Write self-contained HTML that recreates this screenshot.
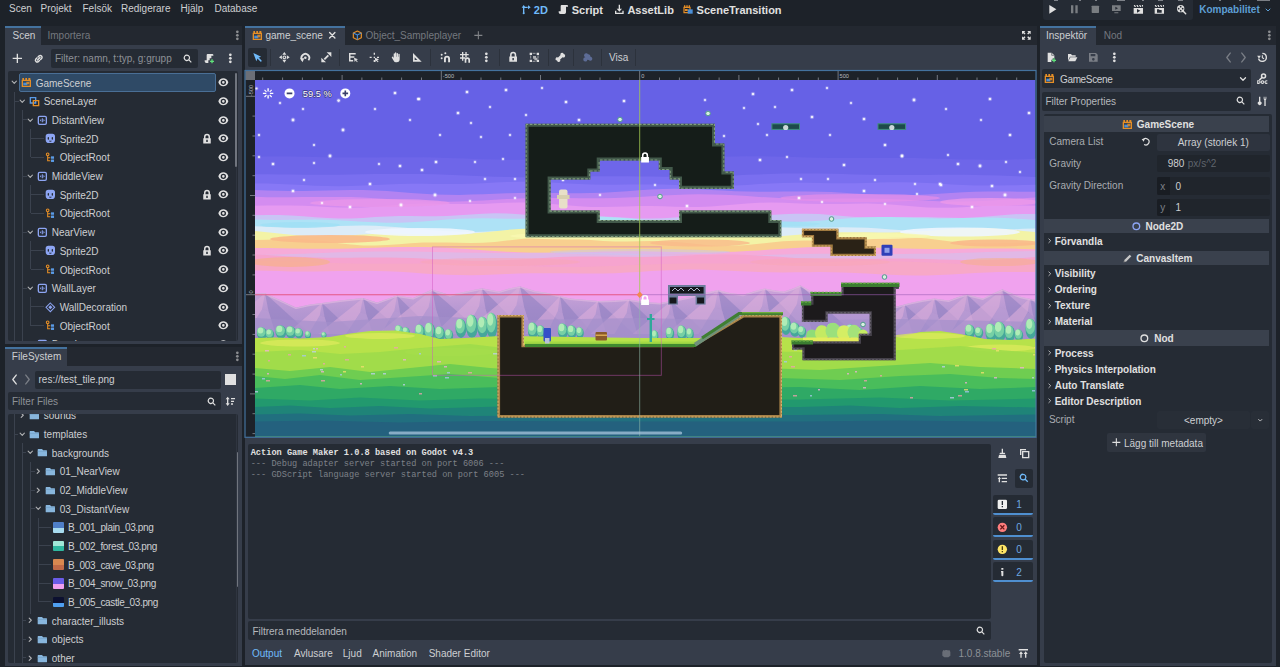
<!DOCTYPE html>
<html lang="sv"><head><meta charset="utf-8"><title>Action Game Maker</title>
<style>
html,body{margin:0;padding:0}
body{width:1280px;height:667px;background:#1d2229;position:relative;overflow:hidden;font-family:"Liberation Sans",sans-serif;font-size:10px;color:#cdcfd2}
.a{position:absolute;box-sizing:border-box}
.t{white-space:pre}
.ic{position:absolute;overflow:visible}
.mono{font-family:"Liberation Mono",monospace}
</style></head>
<body>
<div class="a t" style="left:9px;top:1.1px;height:16px;line-height:16px;font-size:10px;color:#cdcfd2;">Scen</div>
<div class="a t" style="left:40.5px;top:1.1px;height:16px;line-height:16px;font-size:10px;color:#cdcfd2;">Projekt</div>
<div class="a t" style="left:82.5px;top:1.1px;height:16px;line-height:16px;font-size:10px;color:#cdcfd2;">Felsök</div>
<div class="a t" style="left:121px;top:1.1px;height:16px;line-height:16px;font-size:10px;color:#cdcfd2;">Redigerare</div>
<div class="a t" style="left:180.5px;top:1.1px;height:16px;line-height:16px;font-size:10px;color:#cdcfd2;">Hjälp</div>
<div class="a t" style="left:214.5px;top:1.1px;height:16px;line-height:16px;font-size:10px;color:#cdcfd2;">Database</div>
<div class="a t" style="left:533.8px;top:2.4px;height:16px;line-height:16px;font-size:11px;color:#70bafa;font-weight:bold;">2D</div>
<div class="a t" style="left:571.7px;top:2.4px;height:16px;line-height:16px;font-size:11px;color:#e0e0e0;font-weight:bold;">Script</div>
<div class="a t" style="left:627.4px;top:2.4px;height:16px;line-height:16px;font-size:11px;color:#e0e0e0;font-weight:bold;">AssetLib</div>
<div class="a t" style="left:696.6px;top:2.4px;height:16px;line-height:16px;font-size:11px;color:#e0e0e0;font-weight:bold;">SceneTransition</div>
<div class="a" style="left:1043.0px;top:-4.0px;width:149.5px;height:24.0px;background:#252b34;border-radius:3px;"></div>
<div class="a t" style="left:1199.2px;top:2.1px;height:16px;line-height:16px;font-size:10px;color:#5d9fd4;font-weight:bold;">Kompabilitet</div>
<div class="a" style="left:5.0px;top:26.0px;width:236.7px;height:19.0px;background:#232830;"></div>
<div class="a" style="left:5.0px;top:44.5px;width:236.7px;height:299.0px;background:#363d4a;"></div>
<div class="a" style="left:5.0px;top:26.0px;width:35.5px;height:19.0px;background:#363d4a;border-top:2px solid #44729e;"></div>
<div class="a t" style="left:12.5px;top:28.4px;height:16px;line-height:16px;font-size:10px;color:#cdcfd2;">Scen</div>
<div class="a t" style="left:47.5px;top:28.4px;height:16px;line-height:16px;font-size:10px;color:#74787f;">Importera</div>
<div class="a" style="left:5.0px;top:347.0px;width:236.7px;height:19.0px;background:#232830;"></div>
<div class="a" style="left:5.0px;top:365.5px;width:236.7px;height:300.0px;background:#363d4a;"></div>
<div class="a" style="left:5.0px;top:347.0px;width:61.5px;height:19.0px;background:#363d4a;border-top:2px solid #44729e;"></div>
<div class="a t" style="left:11.8px;top:349.4px;height:16px;line-height:16px;font-size:10px;color:#cdcfd2;">FileSystem</div>
<div class="a" style="left:1039.5px;top:26.0px;width:236.3px;height:19.0px;background:#232830;"></div>
<div class="a" style="left:1039.5px;top:44.5px;width:236.3px;height:621.0px;background:#363d4a;"></div>
<div class="a" style="left:1039.5px;top:26.0px;width:56.5px;height:19.0px;background:#363d4a;border-top:2px solid #44729e;"></div>
<div class="a t" style="left:1046px;top:28.4px;height:16px;line-height:16px;font-size:10px;color:#cdcfd2;">Inspektör</div>
<div class="a t" style="left:1103.7px;top:28.4px;height:16px;line-height:16px;font-size:10px;color:#74787f;">Nod</div>
<div class="a" style="left:51.0px;top:49.0px;width:146.5px;height:18.5px;background:#252b34;border-radius:2px;"></div>
<div class="a t" style="left:55px;top:51.1px;height:16px;line-height:16px;font-size:10px;color:#8d9197;">Filter: namn, t:typ, g:grupp</div>
<div class="a" style="left:8px;top:71px;width:229.5px;height:270px;background:#252b34;border-radius:2px;overflow:hidden"><div class="a" style="left:-8px;top:-71px">
<div class="a" style="left:19.0px;top:73.3px;width:196.5px;height:18.6px;background:#2f4a66;border:1px solid #4a6f96;border-radius:2px;"></div>
<div class="a" style="left:14.0px;top:91.5px;width:1.0px;height:249.5px;background:#3b424e;"></div>
<div class="a" style="left:22.0px;top:110.2px;width:1.0px;height:230.8px;background:#3b424e;"></div>
<div class="a" style="left:14.5px;top:100.7px;width:4.0px;height:1.0px;background:#3b424e;"></div>
<div class="a" style="left:22.5px;top:119.4px;width:4.0px;height:1.0px;background:#3b424e;"></div>
<div class="a" style="left:30.1px;top:128.9px;width:1.0px;height:28.4px;background:#3b424e;"></div>
<div class="a" style="left:30.6px;top:138.1px;width:13.4px;height:1.0px;background:#3b424e;"></div>
<div class="a" style="left:30.6px;top:156.8px;width:13.4px;height:1.0px;background:#3b424e;"></div>
<div class="a" style="left:22.5px;top:175.5px;width:4.0px;height:1.0px;background:#3b424e;"></div>
<div class="a" style="left:30.1px;top:185.0px;width:1.0px;height:28.4px;background:#3b424e;"></div>
<div class="a" style="left:30.6px;top:194.2px;width:13.4px;height:1.0px;background:#3b424e;"></div>
<div class="a" style="left:30.6px;top:212.9px;width:13.4px;height:1.0px;background:#3b424e;"></div>
<div class="a" style="left:22.5px;top:231.6px;width:4.0px;height:1.0px;background:#3b424e;"></div>
<div class="a" style="left:30.1px;top:241.1px;width:1.0px;height:28.4px;background:#3b424e;"></div>
<div class="a" style="left:30.6px;top:250.3px;width:13.4px;height:1.0px;background:#3b424e;"></div>
<div class="a" style="left:30.6px;top:269.0px;width:13.4px;height:1.0px;background:#3b424e;"></div>
<div class="a" style="left:22.5px;top:287.7px;width:4.0px;height:1.0px;background:#3b424e;"></div>
<div class="a" style="left:30.1px;top:297.2px;width:1.0px;height:28.4px;background:#3b424e;"></div>
<div class="a" style="left:30.6px;top:306.4px;width:13.4px;height:1.0px;background:#3b424e;"></div>
<div class="a" style="left:30.6px;top:325.1px;width:13.4px;height:1.0px;background:#3b424e;"></div>
<div class="a" style="left:235.0px;top:72.6px;width:2.0px;height:94.5px;background:#70757e;border-radius:1px;"></div>
<div class="a" style="left:235.6px;top:167.0px;width:1.0px;height:174.0px;background:#2f3540;"></div>
<svg class="ic" style="left:10.2px;top:78.2px" width="8.5" height="8.5" viewBox="0 0 16 16" opacity="0.75"><path d="M4 6l4 4 4-4" fill="none" stroke="#e0e0e0" stroke-width="2" stroke-linecap="round" stroke-linejoin="round"/></svg>
<svg class="ic" style="left:21.1px;top:77.2px" width="10.7" height="10.7" viewBox="0 0 16 16"><path d="M2 5h12v9H2z" fill="none" stroke="#e58e26" stroke-width="2"/><path d="M2 1.500h2.500v3H2zM6.500 1.500H9v3H6.500zM11 1.500h3v3h-3z" fill="#e58e26"/><path d="M3.500 8.500h6v4h-6z" fill="#4a8fd8"/><path d="M8 7h4.500v4H8z" fill="#e58e26" opacity=".85"/></svg>
<div class="a t" style="left:35.7px;top:75.5px;height:16px;line-height:16px;font-size:10px;color:#cdcfd2;">GameScene</div>
<svg class="ic" style="left:217.8px;top:77.2px" width="10.7" height="10.7" viewBox="0 0 16 16"><path d="M8 2C4.5 2 1.7 4.1.5 8c1.2 3.9 4 6 7.5 6s6.3-2.1 7.500-6C14.3 4.100 11.500 2 8 2zm0 2a4 4 0 0 1 0 8 4 4 0 0 1 0-8zm0 2a2 2 0 0 0 0 4 2 2 0 0 0 0-4z" fill="#e0e0e0" fill-rule="evenodd"/></svg>
<svg class="ic" style="left:18.2px;top:97.0px" width="8.5" height="8.5" viewBox="0 0 16 16" opacity="0.75"><path d="M4 6l4 4 4-4" fill="none" stroke="#e0e0e0" stroke-width="2" stroke-linecap="round" stroke-linejoin="round"/></svg>
<svg class="ic" style="left:29.1px;top:95.9px" width="10.7" height="10.7" viewBox="0 0 16 16"><path d="M2 2.500h8v8H2z" fill="none" stroke="#5a9be6" stroke-width="2"/><path d="M6.500 7h8v7.500h-8z" fill="none" stroke="#e58e26" stroke-width="2"/></svg>
<div class="a t" style="left:43.7px;top:94.2px;height:16px;line-height:16px;font-size:10px;color:#cdcfd2;">SceneLayer</div>
<svg class="ic" style="left:217.8px;top:95.9px" width="10.7" height="10.7" viewBox="0 0 16 16"><path d="M8 2C4.5 2 1.7 4.1.5 8c1.2 3.9 4 6 7.5 6s6.3-2.1 7.500-6C14.3 4.100 11.500 2 8 2zm0 2a4 4 0 0 1 0 8 4 4 0 0 1 0-8zm0 2a2 2 0 0 0 0 4 2 2 0 0 0 0-4z" fill="#e0e0e0" fill-rule="evenodd"/></svg>
<svg class="ic" style="left:26.2px;top:115.7px" width="8.5" height="8.5" viewBox="0 0 16 16" opacity="0.75"><path d="M4 6l4 4 4-4" fill="none" stroke="#e0e0e0" stroke-width="2" stroke-linecap="round" stroke-linejoin="round"/></svg>
<svg class="ic" style="left:37.1px;top:114.6px" width="10.7" height="10.7" viewBox="0 0 16 16"><rect x="2" y="2" width="12" height="12" rx="2" fill="none" stroke="#8da5f3" stroke-width="2"/><path d="M7.300 5v6h1.400V5zM6.300 6L4.300 8l2 2zM9.700 6l2 2-2 2z" fill="#8da5f3"/></svg>
<div class="a t" style="left:51.7px;top:112.9px;height:16px;line-height:16px;font-size:10px;color:#cdcfd2;">DistantView</div>
<svg class="ic" style="left:217.8px;top:114.6px" width="10.7" height="10.7" viewBox="0 0 16 16"><path d="M8 2C4.5 2 1.7 4.1.5 8c1.2 3.9 4 6 7.5 6s6.3-2.1 7.500-6C14.3 4.100 11.500 2 8 2zm0 2a4 4 0 0 1 0 8 4 4 0 0 1 0-8zm0 2a2 2 0 0 0 0 4 2 2 0 0 0 0-4z" fill="#e0e0e0" fill-rule="evenodd"/></svg>
<svg class="ic" style="left:45.1px;top:133.2px" width="10.7" height="10.7" viewBox="0 0 16 16"><path d="M5 1a4 4 0 0 0-4 4v5a5 5 0 0 0 5 5h4a5 5 0 0 0 5-5V5a4 4 0 0 0-4-4zM5 6a1 1 0 0 1 1 1v2a1 1 0 0 1-2 0V7a1 1 0 0 1 1-1zm6 0a1 1 0 0 1 1 1v2a1 1 0 0 1-2 0V7a1 1 0 0 1 1-1zM6 11.500h4a2 1.500 0 0 1-4 0z" fill="#8da5f3" fill-rule="evenodd"/></svg>
<div class="a t" style="left:59.7px;top:131.6px;height:16px;line-height:16px;font-size:10px;color:#cdcfd2;">Sprite2D</div>
<svg class="ic" style="left:201.0px;top:132.6px" width="12" height="12" viewBox="0 0 16 16"><path d="M8 1a4 4 0 0 0-4 4v2H3v7h10V7h-1V5a4 4 0 0 0-4-4zm0 2a2 2 0 0 1 2 2v2H6V5a2 2 0 0 1 2-2zM7 9h2v3H7z" fill="#e0e0e0" fill-rule="evenodd"/></svg>
<svg class="ic" style="left:217.8px;top:133.2px" width="10.7" height="10.7" viewBox="0 0 16 16"><path d="M8 2C4.5 2 1.7 4.1.5 8c1.2 3.9 4 6 7.5 6s6.3-2.1 7.500-6C14.3 4.100 11.500 2 8 2zm0 2a4 4 0 0 1 0 8 4 4 0 0 1 0-8zm0 2a2 2 0 0 0 0 4 2 2 0 0 0 0-4z" fill="#e0e0e0" fill-rule="evenodd"/></svg>
<svg class="ic" style="left:45.1px;top:152.0px" width="10.7" height="10.7" viewBox="0 0 16 16"><circle cx="4" cy="3.500" r="2" fill="none" stroke="#e58e26" stroke-width="1.600"/><path d="M4 5.500V13h4M4 8.500h4" fill="none" stroke="#e58e26" stroke-width="1.600"/><rect x="9" y="6.500" width="4.500" height="3.600" fill="#5a9be6"/><rect x="9" y="11.300" width="4.500" height="3.600" fill="#5a9be6"/></svg>
<div class="a t" style="left:59.7px;top:150.3px;height:16px;line-height:16px;font-size:10px;color:#cdcfd2;">ObjectRoot</div>
<svg class="ic" style="left:217.8px;top:152.0px" width="10.7" height="10.7" viewBox="0 0 16 16"><path d="M8 2C4.5 2 1.7 4.1.5 8c1.2 3.9 4 6 7.5 6s6.3-2.1 7.500-6C14.3 4.100 11.500 2 8 2zm0 2a4 4 0 0 1 0 8 4 4 0 0 1 0-8zm0 2a2 2 0 0 0 0 4 2 2 0 0 0 0-4z" fill="#e0e0e0" fill-rule="evenodd"/></svg>
<svg class="ic" style="left:26.2px;top:171.8px" width="8.5" height="8.5" viewBox="0 0 16 16" opacity="0.75"><path d="M4 6l4 4 4-4" fill="none" stroke="#e0e0e0" stroke-width="2" stroke-linecap="round" stroke-linejoin="round"/></svg>
<svg class="ic" style="left:37.1px;top:170.7px" width="10.7" height="10.7" viewBox="0 0 16 16"><rect x="2" y="2" width="12" height="12" rx="2" fill="none" stroke="#8da5f3" stroke-width="2"/><path d="M7.300 5v6h1.400V5zM6.300 6L4.300 8l2 2zM9.700 6l2 2-2 2z" fill="#8da5f3"/></svg>
<div class="a t" style="left:51.7px;top:169.0px;height:16px;line-height:16px;font-size:10px;color:#cdcfd2;">MiddleView</div>
<svg class="ic" style="left:217.8px;top:170.7px" width="10.7" height="10.7" viewBox="0 0 16 16"><path d="M8 2C4.5 2 1.7 4.1.5 8c1.2 3.9 4 6 7.5 6s6.3-2.1 7.500-6C14.3 4.100 11.500 2 8 2zm0 2a4 4 0 0 1 0 8 4 4 0 0 1 0-8zm0 2a2 2 0 0 0 0 4 2 2 0 0 0 0-4z" fill="#e0e0e0" fill-rule="evenodd"/></svg>
<svg class="ic" style="left:45.1px;top:189.3px" width="10.7" height="10.7" viewBox="0 0 16 16"><path d="M5 1a4 4 0 0 0-4 4v5a5 5 0 0 0 5 5h4a5 5 0 0 0 5-5V5a4 4 0 0 0-4-4zM5 6a1 1 0 0 1 1 1v2a1 1 0 0 1-2 0V7a1 1 0 0 1 1-1zm6 0a1 1 0 0 1 1 1v2a1 1 0 0 1-2 0V7a1 1 0 0 1 1-1zM6 11.500h4a2 1.500 0 0 1-4 0z" fill="#8da5f3" fill-rule="evenodd"/></svg>
<div class="a t" style="left:59.7px;top:187.7px;height:16px;line-height:16px;font-size:10px;color:#cdcfd2;">Sprite2D</div>
<svg class="ic" style="left:201.0px;top:188.7px" width="12" height="12" viewBox="0 0 16 16"><path d="M8 1a4 4 0 0 0-4 4v2H3v7h10V7h-1V5a4 4 0 0 0-4-4zm0 2a2 2 0 0 1 2 2v2H6V5a2 2 0 0 1 2-2zM7 9h2v3H7z" fill="#e0e0e0" fill-rule="evenodd"/></svg>
<svg class="ic" style="left:217.8px;top:189.3px" width="10.7" height="10.7" viewBox="0 0 16 16"><path d="M8 2C4.5 2 1.7 4.1.5 8c1.2 3.9 4 6 7.5 6s6.3-2.1 7.500-6C14.3 4.100 11.500 2 8 2zm0 2a4 4 0 0 1 0 8 4 4 0 0 1 0-8zm0 2a2 2 0 0 0 0 4 2 2 0 0 0 0-4z" fill="#e0e0e0" fill-rule="evenodd"/></svg>
<svg class="ic" style="left:45.1px;top:208.1px" width="10.7" height="10.7" viewBox="0 0 16 16"><circle cx="4" cy="3.500" r="2" fill="none" stroke="#e58e26" stroke-width="1.600"/><path d="M4 5.500V13h4M4 8.500h4" fill="none" stroke="#e58e26" stroke-width="1.600"/><rect x="9" y="6.500" width="4.500" height="3.600" fill="#5a9be6"/><rect x="9" y="11.300" width="4.500" height="3.600" fill="#5a9be6"/></svg>
<div class="a t" style="left:59.7px;top:206.4px;height:16px;line-height:16px;font-size:10px;color:#cdcfd2;">ObjectRoot</div>
<svg class="ic" style="left:217.8px;top:208.1px" width="10.7" height="10.7" viewBox="0 0 16 16"><path d="M8 2C4.5 2 1.7 4.1.5 8c1.2 3.9 4 6 7.5 6s6.3-2.1 7.500-6C14.3 4.100 11.500 2 8 2zm0 2a4 4 0 0 1 0 8 4 4 0 0 1 0-8zm0 2a2 2 0 0 0 0 4 2 2 0 0 0 0-4z" fill="#e0e0e0" fill-rule="evenodd"/></svg>
<svg class="ic" style="left:26.2px;top:227.8px" width="8.5" height="8.5" viewBox="0 0 16 16" opacity="0.75"><path d="M4 6l4 4 4-4" fill="none" stroke="#e0e0e0" stroke-width="2" stroke-linecap="round" stroke-linejoin="round"/></svg>
<svg class="ic" style="left:37.1px;top:226.8px" width="10.7" height="10.7" viewBox="0 0 16 16"><rect x="2" y="2" width="12" height="12" rx="2" fill="none" stroke="#8da5f3" stroke-width="2"/><path d="M7.300 5v6h1.400V5zM6.300 6L4.300 8l2 2zM9.700 6l2 2-2 2z" fill="#8da5f3"/></svg>
<div class="a t" style="left:51.7px;top:225.1px;height:16px;line-height:16px;font-size:10px;color:#cdcfd2;">NearView</div>
<svg class="ic" style="left:217.8px;top:226.8px" width="10.7" height="10.7" viewBox="0 0 16 16"><path d="M8 2C4.5 2 1.7 4.1.5 8c1.2 3.9 4 6 7.5 6s6.3-2.1 7.500-6C14.3 4.100 11.500 2 8 2zm0 2a4 4 0 0 1 0 8 4 4 0 0 1 0-8zm0 2a2 2 0 0 0 0 4 2 2 0 0 0 0-4z" fill="#e0e0e0" fill-rule="evenodd"/></svg>
<svg class="ic" style="left:45.1px;top:245.4px" width="10.7" height="10.7" viewBox="0 0 16 16"><path d="M5 1a4 4 0 0 0-4 4v5a5 5 0 0 0 5 5h4a5 5 0 0 0 5-5V5a4 4 0 0 0-4-4zM5 6a1 1 0 0 1 1 1v2a1 1 0 0 1-2 0V7a1 1 0 0 1 1-1zm6 0a1 1 0 0 1 1 1v2a1 1 0 0 1-2 0V7a1 1 0 0 1 1-1zM6 11.500h4a2 1.500 0 0 1-4 0z" fill="#8da5f3" fill-rule="evenodd"/></svg>
<div class="a t" style="left:59.7px;top:243.8px;height:16px;line-height:16px;font-size:10px;color:#cdcfd2;">Sprite2D</div>
<svg class="ic" style="left:201.0px;top:244.8px" width="12" height="12" viewBox="0 0 16 16"><path d="M8 1a4 4 0 0 0-4 4v2H3v7h10V7h-1V5a4 4 0 0 0-4-4zm0 2a2 2 0 0 1 2 2v2H6V5a2 2 0 0 1 2-2zM7 9h2v3H7z" fill="#e0e0e0" fill-rule="evenodd"/></svg>
<svg class="ic" style="left:217.8px;top:245.4px" width="10.7" height="10.7" viewBox="0 0 16 16"><path d="M8 2C4.5 2 1.7 4.1.5 8c1.2 3.9 4 6 7.5 6s6.3-2.1 7.500-6C14.3 4.100 11.500 2 8 2zm0 2a4 4 0 0 1 0 8 4 4 0 0 1 0-8zm0 2a2 2 0 0 0 0 4 2 2 0 0 0 0-4z" fill="#e0e0e0" fill-rule="evenodd"/></svg>
<svg class="ic" style="left:45.1px;top:264.1px" width="10.7" height="10.7" viewBox="0 0 16 16"><circle cx="4" cy="3.500" r="2" fill="none" stroke="#e58e26" stroke-width="1.600"/><path d="M4 5.500V13h4M4 8.500h4" fill="none" stroke="#e58e26" stroke-width="1.600"/><rect x="9" y="6.500" width="4.500" height="3.600" fill="#5a9be6"/><rect x="9" y="11.300" width="4.500" height="3.600" fill="#5a9be6"/></svg>
<div class="a t" style="left:59.7px;top:262.5px;height:16px;line-height:16px;font-size:10px;color:#cdcfd2;">ObjectRoot</div>
<svg class="ic" style="left:217.8px;top:264.1px" width="10.7" height="10.7" viewBox="0 0 16 16"><path d="M8 2C4.5 2 1.7 4.1.5 8c1.2 3.9 4 6 7.5 6s6.3-2.1 7.500-6C14.3 4.100 11.500 2 8 2zm0 2a4 4 0 0 1 0 8 4 4 0 0 1 0-8zm0 2a2 2 0 0 0 0 4 2 2 0 0 0 0-4z" fill="#e0e0e0" fill-rule="evenodd"/></svg>
<svg class="ic" style="left:26.2px;top:283.9px" width="8.5" height="8.5" viewBox="0 0 16 16" opacity="0.75"><path d="M4 6l4 4 4-4" fill="none" stroke="#e0e0e0" stroke-width="2" stroke-linecap="round" stroke-linejoin="round"/></svg>
<svg class="ic" style="left:37.1px;top:282.8px" width="10.7" height="10.7" viewBox="0 0 16 16"><rect x="2" y="2" width="12" height="12" rx="2" fill="none" stroke="#8da5f3" stroke-width="2"/><path d="M7.300 5v6h1.400V5zM6.300 6L4.300 8l2 2zM9.700 6l2 2-2 2z" fill="#8da5f3"/></svg>
<div class="a t" style="left:51.7px;top:281.2px;height:16px;line-height:16px;font-size:10px;color:#cdcfd2;">WallLayer</div>
<svg class="ic" style="left:217.8px;top:282.8px" width="10.7" height="10.7" viewBox="0 0 16 16"><path d="M8 2C4.5 2 1.7 4.1.5 8c1.2 3.9 4 6 7.5 6s6.3-2.1 7.500-6C14.3 4.100 11.500 2 8 2zm0 2a4 4 0 0 1 0 8 4 4 0 0 1 0-8zm0 2a2 2 0 0 0 0 4 2 2 0 0 0 0-4z" fill="#e0e0e0" fill-rule="evenodd"/></svg>
<svg class="ic" style="left:45.1px;top:301.5px" width="10.7" height="10.7" viewBox="0 0 16 16"><path d="M8 1.500L14.500 8 8 14.500 1.500 8z" fill="none" stroke="#8da5f3" stroke-width="1.500"/><path d="M8 5l3 3-3 3-3-3z" fill="#8da5f3"/></svg>
<div class="a t" style="left:59.7px;top:299.9px;height:16px;line-height:16px;font-size:10px;color:#cdcfd2;">WallDecoration</div>
<svg class="ic" style="left:217.8px;top:301.5px" width="10.7" height="10.7" viewBox="0 0 16 16"><path d="M8 2C4.5 2 1.7 4.1.5 8c1.2 3.9 4 6 7.5 6s6.3-2.1 7.500-6C14.3 4.100 11.500 2 8 2zm0 2a4 4 0 0 1 0 8 4 4 0 0 1 0-8zm0 2a2 2 0 0 0 0 4 2 2 0 0 0 0-4z" fill="#e0e0e0" fill-rule="evenodd"/></svg>
<svg class="ic" style="left:45.1px;top:320.2px" width="10.7" height="10.7" viewBox="0 0 16 16"><circle cx="4" cy="3.500" r="2" fill="none" stroke="#e58e26" stroke-width="1.600"/><path d="M4 5.500V13h4M4 8.500h4" fill="none" stroke="#e58e26" stroke-width="1.600"/><rect x="9" y="6.500" width="4.500" height="3.600" fill="#5a9be6"/><rect x="9" y="11.300" width="4.500" height="3.600" fill="#5a9be6"/></svg>
<div class="a t" style="left:59.7px;top:318.6px;height:16px;line-height:16px;font-size:10px;color:#cdcfd2;">ObjectRoot</div>
<svg class="ic" style="left:217.8px;top:320.2px" width="10.7" height="10.7" viewBox="0 0 16 16"><path d="M8 2C4.5 2 1.7 4.1.5 8c1.2 3.9 4 6 7.5 6s6.3-2.1 7.500-6C14.3 4.100 11.500 2 8 2zm0 2a4 4 0 0 1 0 8 4 4 0 0 1 0-8zm0 2a2 2 0 0 0 0 4 2 2 0 0 0 0-4z" fill="#e0e0e0" fill-rule="evenodd"/></svg>
<svg class="ic" style="left:26.2px;top:340.1px" width="8.5" height="8.5" viewBox="0 0 16 16" opacity="0.75"><path d="M4 6l4 4 4-4" fill="none" stroke="#e0e0e0" stroke-width="2" stroke-linecap="round" stroke-linejoin="round"/></svg>
<svg class="ic" style="left:37.1px;top:338.9px" width="10.7" height="10.7" viewBox="0 0 16 16"><rect x="2" y="2" width="12" height="12" rx="2" fill="none" stroke="#8da5f3" stroke-width="2"/><path d="M7.300 5v6h1.400V5zM6.300 6L4.300 8l2 2zM9.700 6l2 2-2 2z" fill="#8da5f3"/></svg>
<div class="a t" style="left:51.7px;top:337.3px;height:16px;line-height:16px;font-size:10px;color:#cdcfd2;">BaseLayer</div>
<svg class="ic" style="left:217.8px;top:338.9px" width="10.7" height="10.7" viewBox="0 0 16 16"><path d="M8 2C4.5 2 1.7 4.1.5 8c1.2 3.9 4 6 7.5 6s6.3-2.1 7.500-6C14.3 4.100 11.500 2 8 2zm0 2a4 4 0 0 1 0 8 4 4 0 0 1 0-8zm0 2a2 2 0 0 0 0 4 2 2 0 0 0 0-4z" fill="#e0e0e0" fill-rule="evenodd"/></svg>
</div></div>
<div class="a" style="left:34.5px;top:370.5px;width:186.5px;height:18.5px;background:#252b34;border-radius:2px;"></div>
<div class="a t" style="left:38.5px;top:372.4px;height:16px;line-height:16px;font-size:10px;color:#cdcfd2;">res://test_tile.png</div>
<div class="a" style="left:225.2px;top:373.8px;width:11.0px;height:11.2px;background:#e0e0e0;"></div>
<div class="a" style="left:7.8px;top:392.3px;width:213.2px;height:18.2px;background:#252b34;border-radius:2px;"></div>
<div class="a t" style="left:12px;top:394.3px;height:16px;line-height:16px;font-size:10px;color:#8d9197;">Filter Files</div>
<div class="a" style="left:8px;top:413.5px;width:229.5px;height:249.5px;background:#252b34;border-radius:2px;overflow:hidden"><div class="a" style="left:-8px;top:-413.5px">
<div class="a" style="left:14.0px;top:414.0px;width:1.0px;height:249.0px;background:#3b424e;"></div>
<div class="a" style="left:21.8px;top:443.0px;width:1.0px;height:220.0px;background:#3b424e;"></div>
<div class="a" style="left:30.0px;top:461.7px;width:1.0px;height:152.8px;background:#3b424e;"></div>
<div class="a" style="left:38.0px;top:517.6px;width:1.0px;height:84.2px;background:#3b424e;"></div>
<div class="a" style="left:14.5px;top:433.5px;width:3.5px;height:1.0px;background:#3b424e;"></div>
<div class="a" style="left:22.3px;top:452.2px;width:3.7px;height:1.0px;background:#3b424e;"></div>
<div class="a" style="left:22.3px;top:620.0px;width:3.7px;height:1.0px;background:#3b424e;"></div>
<div class="a" style="left:22.3px;top:638.7px;width:3.7px;height:1.0px;background:#3b424e;"></div>
<div class="a" style="left:22.3px;top:657.3px;width:3.7px;height:1.0px;background:#3b424e;"></div>
<div class="a" style="left:30.5px;top:470.8px;width:4.0px;height:1.0px;background:#3b424e;"></div>
<div class="a" style="left:30.5px;top:489.5px;width:4.0px;height:1.0px;background:#3b424e;"></div>
<div class="a" style="left:30.5px;top:508.1px;width:4.0px;height:1.0px;background:#3b424e;"></div>
<div class="a" style="left:38.5px;top:526.8px;width:12.5px;height:1.0px;background:#3b424e;"></div>
<div class="a" style="left:38.5px;top:545.4px;width:12.5px;height:1.0px;background:#3b424e;"></div>
<div class="a" style="left:38.5px;top:564.1px;width:12.5px;height:1.0px;background:#3b424e;"></div>
<div class="a" style="left:38.5px;top:582.8px;width:12.5px;height:1.0px;background:#3b424e;"></div>
<div class="a" style="left:38.5px;top:601.4px;width:12.5px;height:1.0px;background:#3b424e;"></div>
<div class="a" style="left:235.8px;top:451.5px;width:2.0px;height:135.0px;background:#70757e;border-radius:1px;"></div>
<div class="a" style="left:236.3px;top:414.0px;width:1.0px;height:249.0px;background:#2f3540;"></div>
<svg class="ic" style="left:18.1px;top:411.1px" width="8.5" height="8.5" viewBox="0 0 16 16" opacity="0.75"><path d="M6 4l4 4-4 4" fill="none" stroke="#e0e0e0" stroke-width="2" stroke-linecap="round" stroke-linejoin="round"/></svg>
<svg class="ic" style="left:29.2px;top:410.0px" width="10.7" height="10.7" viewBox="0 0 16 16"><path d="M2 3a1 1 0 0 0-1 1v9a1 1 0 0 0 1 1h12a1 1 0 0 0 1-1V6a1 1 0 0 0-1-1H9L8 3.4A1 1 0 0 0 7.200 3z" fill="#88b6dd"/><path d="M1 6.500h14V7H1z" fill="#6e9bc4"/></svg>
<div class="a t" style="left:43.8px;top:408.4px;height:16px;line-height:16px;font-size:10px;color:#cdcfd2;">sounds</div>
<svg class="ic" style="left:18.1px;top:429.8px" width="8.5" height="8.5" viewBox="0 0 16 16" opacity="0.75"><path d="M4 6l4 4 4-4" fill="none" stroke="#e0e0e0" stroke-width="2" stroke-linecap="round" stroke-linejoin="round"/></svg>
<svg class="ic" style="left:29.2px;top:428.7px" width="10.7" height="10.7" viewBox="0 0 16 16"><path d="M2 3a1 1 0 0 0-1 1v9a1 1 0 0 0 1 1h12a1 1 0 0 0 1-1V6a1 1 0 0 0-1-1H9L8 3.4A1 1 0 0 0 7.200 3z" fill="#88b6dd"/><path d="M1 6.500h14V7H1z" fill="#6e9bc4"/></svg>
<div class="a t" style="left:43.8px;top:427.0px;height:16px;line-height:16px;font-size:10px;color:#cdcfd2;">templates</div>
<svg class="ic" style="left:26.1px;top:448.4px" width="8.5" height="8.5" viewBox="0 0 16 16" opacity="0.75"><path d="M4 6l4 4 4-4" fill="none" stroke="#e0e0e0" stroke-width="2" stroke-linecap="round" stroke-linejoin="round"/></svg>
<svg class="ic" style="left:37.2px;top:447.3px" width="10.7" height="10.7" viewBox="0 0 16 16"><path d="M2 3a1 1 0 0 0-1 1v9a1 1 0 0 0 1 1h12a1 1 0 0 0 1-1V6a1 1 0 0 0-1-1H9L8 3.4A1 1 0 0 0 7.200 3z" fill="#88b6dd"/><path d="M1 6.500h14V7H1z" fill="#6e9bc4"/></svg>
<div class="a t" style="left:51.8px;top:445.7px;height:16px;line-height:16px;font-size:10px;color:#cdcfd2;">backgrounds</div>
<svg class="ic" style="left:34.0px;top:467.1px" width="8.5" height="8.5" viewBox="0 0 16 16" opacity="0.75"><path d="M6 4l4 4-4 4" fill="none" stroke="#e0e0e0" stroke-width="2" stroke-linecap="round" stroke-linejoin="round"/></svg>
<svg class="ic" style="left:45.2px;top:466.0px" width="10.7" height="10.7" viewBox="0 0 16 16"><path d="M2 3a1 1 0 0 0-1 1v9a1 1 0 0 0 1 1h12a1 1 0 0 0 1-1V6a1 1 0 0 0-1-1H9L8 3.4A1 1 0 0 0 7.200 3z" fill="#88b6dd"/><path d="M1 6.500h14V7H1z" fill="#6e9bc4"/></svg>
<div class="a t" style="left:59.8px;top:464.3px;height:16px;line-height:16px;font-size:10px;color:#cdcfd2;">01_NearView</div>
<svg class="ic" style="left:34.0px;top:485.8px" width="8.5" height="8.5" viewBox="0 0 16 16" opacity="0.75"><path d="M6 4l4 4-4 4" fill="none" stroke="#e0e0e0" stroke-width="2" stroke-linecap="round" stroke-linejoin="round"/></svg>
<svg class="ic" style="left:45.2px;top:484.6px" width="10.7" height="10.7" viewBox="0 0 16 16"><path d="M2 3a1 1 0 0 0-1 1v9a1 1 0 0 0 1 1h12a1 1 0 0 0 1-1V6a1 1 0 0 0-1-1H9L8 3.4A1 1 0 0 0 7.200 3z" fill="#88b6dd"/><path d="M1 6.500h14V7H1z" fill="#6e9bc4"/></svg>
<div class="a t" style="left:59.8px;top:483.0px;height:16px;line-height:16px;font-size:10px;color:#cdcfd2;">02_MiddleView</div>
<svg class="ic" style="left:34.0px;top:504.4px" width="8.5" height="8.5" viewBox="0 0 16 16" opacity="0.75"><path d="M4 6l4 4 4-4" fill="none" stroke="#e0e0e0" stroke-width="2" stroke-linecap="round" stroke-linejoin="round"/></svg>
<svg class="ic" style="left:45.2px;top:503.3px" width="10.7" height="10.7" viewBox="0 0 16 16"><path d="M2 3a1 1 0 0 0-1 1v9a1 1 0 0 0 1 1h12a1 1 0 0 0 1-1V6a1 1 0 0 0-1-1H9L8 3.4A1 1 0 0 0 7.200 3z" fill="#88b6dd"/><path d="M1 6.500h14V7H1z" fill="#6e9bc4"/></svg>
<div class="a t" style="left:59.8px;top:501.6px;height:16px;line-height:16px;font-size:10px;color:#cdcfd2;">03_DistantView</div>
<div class="a" style="left:53.0px;top:522.0px;width:10.7px;height:10.7px;background:linear-gradient(#4f7fc8 0 55%,#a8dcf0 55% 100%);border-radius:1px;"></div>
<div class="a t" style="left:68.1px;top:520.3px;height:16px;line-height:16px;font-size:10px;color:#cdcfd2;letter-spacing:-0.36px;">B_001_plain_03.png</div>
<div class="a" style="left:53.0px;top:540.6px;width:10.7px;height:10.7px;background:linear-gradient(#a0e8d8 0 55%,#2fb8a0 55% 100%);border-radius:1px;"></div>
<div class="a t" style="left:68.1px;top:538.9px;height:16px;line-height:16px;font-size:10px;color:#cdcfd2;letter-spacing:-0.36px;">B_002_forest_03.png</div>
<div class="a" style="left:53.0px;top:559.3px;width:10.7px;height:10.7px;background:linear-gradient(#d88850 0 55%,#c06a48 55% 100%);border-radius:1px;"></div>
<div class="a t" style="left:68.1px;top:557.6px;height:16px;line-height:16px;font-size:10px;color:#cdcfd2;letter-spacing:-0.36px;">B_003_cave_03.png</div>
<div class="a" style="left:53.0px;top:578.0px;width:10.7px;height:10.7px;background:linear-gradient(#6a5ce8 0 55%,#f0a0f0 55% 100%);border-radius:1px;"></div>
<div class="a t" style="left:68.1px;top:576.2px;height:16px;line-height:16px;font-size:10px;color:#cdcfd2;letter-spacing:-0.36px;">B_004_snow_03.png</div>
<div class="a" style="left:53.0px;top:596.6px;width:10.7px;height:10.7px;background:linear-gradient(#0c1030 0 55%,#4f9ff0 55% 100%);border-radius:1px;"></div>
<div class="a t" style="left:68.1px;top:594.9px;height:16px;line-height:16px;font-size:10px;color:#cdcfd2;letter-spacing:-0.36px;">B_005_castle_03.png</div>
<svg class="ic" style="left:26.1px;top:616.3px" width="8.5" height="8.5" viewBox="0 0 16 16" opacity="0.75"><path d="M6 4l4 4-4 4" fill="none" stroke="#e0e0e0" stroke-width="2" stroke-linecap="round" stroke-linejoin="round"/></svg>
<svg class="ic" style="left:37.2px;top:615.2px" width="10.7" height="10.7" viewBox="0 0 16 16"><path d="M2 3a1 1 0 0 0-1 1v9a1 1 0 0 0 1 1h12a1 1 0 0 0 1-1V6a1 1 0 0 0-1-1H9L8 3.4A1 1 0 0 0 7.200 3z" fill="#88b6dd"/><path d="M1 6.500h14V7H1z" fill="#6e9bc4"/></svg>
<div class="a t" style="left:51.8px;top:613.5px;height:16px;line-height:16px;font-size:10px;color:#cdcfd2;">character_illusts</div>
<svg class="ic" style="left:26.1px;top:634.9px" width="8.5" height="8.5" viewBox="0 0 16 16" opacity="0.75"><path d="M6 4l4 4-4 4" fill="none" stroke="#e0e0e0" stroke-width="2" stroke-linecap="round" stroke-linejoin="round"/></svg>
<svg class="ic" style="left:37.2px;top:633.8px" width="10.7" height="10.7" viewBox="0 0 16 16"><path d="M2 3a1 1 0 0 0-1 1v9a1 1 0 0 0 1 1h12a1 1 0 0 0 1-1V6a1 1 0 0 0-1-1H9L8 3.4A1 1 0 0 0 7.200 3z" fill="#88b6dd"/><path d="M1 6.500h14V7H1z" fill="#6e9bc4"/></svg>
<div class="a t" style="left:51.8px;top:632.2px;height:16px;line-height:16px;font-size:10px;color:#cdcfd2;">objects</div>
<svg class="ic" style="left:26.1px;top:653.6px" width="8.5" height="8.5" viewBox="0 0 16 16" opacity="0.75"><path d="M6 4l4 4-4 4" fill="none" stroke="#e0e0e0" stroke-width="2" stroke-linecap="round" stroke-linejoin="round"/></svg>
<svg class="ic" style="left:37.2px;top:652.5px" width="10.7" height="10.7" viewBox="0 0 16 16"><path d="M2 3a1 1 0 0 0-1 1v9a1 1 0 0 0 1 1h12a1 1 0 0 0 1-1V6a1 1 0 0 0-1-1H9L8 3.4A1 1 0 0 0 7.200 3z" fill="#88b6dd"/><path d="M1 6.500h14V7H1z" fill="#6e9bc4"/></svg>
<div class="a t" style="left:51.8px;top:650.8px;height:16px;line-height:16px;font-size:10px;color:#cdcfd2;">other</div>
</div></div>
<div class="a" style="left:244.8px;top:26.0px;width:792.2px;height:639.0px;background:#363d4a;"></div>
<div class="a" style="left:244.8px;top:26.0px;width:792.2px;height:18.5px;background:#232830;"></div>
<div class="a" style="left:244.8px;top:26.0px;width:100.5px;height:18.5px;background:#363d4a;border-top:2px solid #44729e;"></div>
<div class="a t" style="left:265.5px;top:28.2px;height:16px;line-height:16px;font-size:10px;color:#cdcfd2;">game_scene</div>
<div class="a t" style="left:365.6px;top:28.2px;height:16px;line-height:16px;font-size:10px;color:#74787f;">Object_Sampleplayer</div>
<div class="a" style="left:248.2px;top:48.0px;width:18.5px;height:19.0px;background:#252b34;border-radius:2px;"></div>
<div class="a t" style="left:609px;top:50.4px;height:16px;line-height:16px;font-size:10px;color:#cdcfd2;">Visa</div>
<svg class="ic" style="left:244px;top:70px" width="793" height="368" viewBox="244 70 793 368"><defs><clipPath id="vp"><rect x="255" y="80" width="780.5" height="356.5"/></clipPath></defs><rect x="244.8" y="70" width="791.7" height="367.5" fill="#1f242c"/><g clip-path="url(#vp)"><rect x="255" y="80" width="780.5" height="356.5" fill="#6661e6"/><path d="M255.0 156.7 L267.0 156.5 L279.0 156.5 L291.0 156.6 L303.0 156.8 L315.0 157.1 L327.0 157.3 L339.0 157.4 L351.0 157.5 L363.0 157.5 L375.0 157.4 L387.0 157.2 L399.0 157.2 L411.0 157.2 L423.0 157.3 L435.0 157.5 L447.0 157.9 L459.0 158.3 L471.0 158.8 L483.0 159.2 L495.0 159.5 L507.0 159.7 L519.0 159.7 L531.0 159.5 L543.0 159.3 L555.0 159.0 L567.0 158.7 L579.0 158.4 L591.0 158.3 L603.0 158.3 L615.0 158.3 L627.0 158.4 L639.0 158.4 L651.0 158.4 L663.0 158.4 L675.0 158.2 L687.0 157.8 L699.0 157.5 L711.0 157.0 L723.0 156.7 L735.0 156.4 L747.0 156.2 L759.0 156.2 L771.0 156.4 L783.0 156.7 L795.0 157.0 L807.0 157.4 L819.0 157.7 L831.0 158.0 L843.0 158.1 L855.0 158.1 L867.0 158.1 L879.0 158.0 L891.0 158.0 L903.0 158.0 L915.0 158.1 L927.0 158.4 L939.0 158.7 L951.0 159.0 L963.0 159.4 L975.0 159.6 L987.0 159.8 L999.0 159.7 L1011.0 159.6 L1023.0 159.2 L1035.0 158.8 L1035.5 158.4 L1035.5 436.5 L255 436.5 Z" fill="#6e66e9"/><path d="M255.0 174.2 L267.0 174.2 L279.0 174.4 L291.0 174.5 L303.0 174.7 L315.0 174.8 L327.0 174.8 L339.0 174.7 L351.0 174.5 L363.0 174.3 L375.0 174.1 L387.0 173.9 L399.0 173.9 L411.0 173.9 L423.0 174.0 L435.0 174.3 L447.0 174.8 L459.0 175.3 L471.0 175.8 L483.0 176.3 L495.0 176.7 L507.0 177.0 L519.0 177.2 L531.0 177.2 L543.0 177.2 L555.0 177.0 L567.0 176.7 L579.0 176.5 L591.0 176.3 L603.0 176.2 L615.0 176.2 L627.0 176.3 L639.0 176.4 L651.0 176.5 L663.0 176.7 L675.0 176.7 L687.0 176.7 L699.0 176.5 L711.0 176.2 L723.0 175.8 L735.0 175.4 L747.0 174.8 L759.0 174.4 L771.0 173.9 L783.0 173.6 L795.0 173.5 L807.0 173.5 L819.0 173.6 L831.0 173.8 L843.0 174.1 L855.0 174.4 L867.0 174.7 L879.0 174.9 L891.0 175.0 L903.0 175.1 L915.0 175.0 L927.0 174.9 L939.0 174.8 L951.0 174.8 L963.0 174.8 L975.0 174.9 L987.0 175.2 L999.0 175.6 L1011.0 176.0 L1023.0 176.5 L1035.0 176.9 L1035.5 177.3 L1035.5 436.5 L255 436.5 Z" fill="#7a6ff0"/><path d="M255.0 183.5 L267.0 183.6 L279.0 183.9 L291.0 184.4 L303.0 185.1 L315.0 185.7 L327.0 186.1 L339.0 186.2 L351.0 186.0 L363.0 185.6 L375.0 185.0 L387.0 184.4 L399.0 184.0 L411.0 183.8 L423.0 183.8 L435.0 183.9 L447.0 184.0 L459.0 183.9 L471.0 183.7 L483.0 183.2 L495.0 182.6 L507.0 182.1 L519.0 181.8 L531.0 181.8 L543.0 182.1 L555.0 182.7 L567.0 183.4 L579.0 184.0 L591.0 184.5 L603.0 184.7 L615.0 184.7 L627.0 184.6 L639.0 184.5 L651.0 184.5 L663.0 184.6 L675.0 185.0 L687.0 185.5 L699.0 185.9 L711.0 186.0 L723.0 185.9 L735.0 185.5 L747.0 184.9 L759.0 184.1 L771.0 183.5 L783.0 183.0 L795.0 182.8 L807.0 182.8 L819.0 183.0 L831.0 183.2 L843.0 183.3 L855.0 183.2 L867.0 183.0 L879.0 182.6 L891.0 182.3 L903.0 182.2 L915.0 182.4 L927.0 182.9 L939.0 183.6 L951.0 184.4 L963.0 185.0 L975.0 185.5 L987.0 185.6 L999.0 185.5 L1011.0 185.3 L1023.0 185.0 L1035.0 184.8 L1035.5 184.8 L1035.5 436.5 L255 436.5 Z" fill="#8778f6"/><path d="M255.0 190.0 L267.0 190.4 L279.0 190.7 L291.0 190.9 L303.0 190.9 L315.0 190.7 L327.0 190.4 L339.0 190.2 L351.0 190.0 L363.0 190.1 L375.0 190.5 L387.0 191.1 L399.0 192.0 L411.0 192.9 L423.0 193.8 L435.0 194.4 L447.0 194.8 L459.0 194.9 L471.0 194.6 L483.0 194.2 L495.0 193.7 L507.0 193.2 L519.0 192.9 L531.0 192.8 L543.0 192.9 L555.0 193.0 L567.0 193.2 L579.0 193.3 L591.0 193.1 L603.0 192.7 L615.0 192.0 L627.0 191.2 L639.0 190.3 L651.0 189.6 L663.0 189.0 L675.0 188.8 L687.0 188.9 L699.0 189.3 L711.0 189.9 L723.0 190.6 L735.0 191.2 L747.0 191.6 L759.0 191.8 L771.0 191.8 L783.0 191.6 L795.0 191.5 L807.0 191.5 L819.0 191.7 L831.0 192.1 L843.0 192.7 L855.0 193.5 L867.0 194.2 L879.0 194.9 L891.0 195.2 L903.0 195.3 L915.0 195.0 L927.0 194.4 L939.0 193.7 L951.0 192.9 L963.0 192.2 L975.0 191.8 L987.0 191.5 L999.0 191.5 L1011.0 191.6 L1023.0 191.8 L1035.0 191.8 L1035.5 191.7 L1035.5 436.5 L255 436.5 Z" fill="#b283f2"/><path d="M255.0 196.8 L267.0 197.2 L279.0 197.3 L291.0 197.3 L303.0 197.1 L315.0 197.0 L327.0 196.9 L339.0 196.9 L351.0 197.1 L363.0 197.5 L375.0 198.2 L387.0 198.9 L399.0 199.8 L411.0 200.6 L423.0 201.2 L435.0 201.6 L447.0 201.7 L459.0 201.5 L471.0 201.1 L483.0 200.5 L495.0 199.8 L507.0 199.1 L519.0 198.6 L531.0 198.2 L543.0 198.0 L555.0 198.0 L567.0 198.1 L579.0 198.2 L591.0 198.3 L603.0 198.3 L615.0 198.0 L627.0 197.6 L639.0 197.0 L651.0 196.3 L663.0 195.6 L675.0 194.9 L687.0 194.5 L699.0 194.3 L711.0 194.4 L723.0 194.7 L735.0 195.3 L747.0 196.1 L759.0 196.9 L771.0 197.6 L783.0 198.2 L795.0 198.7 L807.0 198.9 L819.0 198.9 L831.0 198.8 L843.0 198.6 L855.0 198.5 L867.0 198.5 L879.0 198.7 L891.0 199.1 L903.0 199.6 L915.0 200.2 L927.0 200.7 L939.0 201.2 L951.0 201.5 L963.0 201.5 L975.0 201.2 L987.0 200.7 L999.0 199.9 L1011.0 199.1 L1023.0 198.2 L1035.0 197.4 L1035.5 196.8 L1035.5 436.5 L255 436.5 Z" fill="#d48cf0"/><path d="M255.0 205.7 L267.0 205.6 L279.0 205.4 L291.0 205.4 L303.0 205.7 L315.0 206.3 L327.0 207.0 L339.0 207.6 L351.0 207.8 L363.0 207.6 L375.0 206.8 L387.0 205.8 L399.0 204.8 L411.0 204.0 L423.0 203.6 L435.0 203.7 L447.0 203.9 L459.0 204.1 L471.0 204.1 L483.0 203.9 L495.0 203.3 L507.0 202.8 L519.0 202.5 L531.0 202.6 L543.0 203.3 L555.0 204.2 L567.0 205.3 L579.0 206.3 L591.0 206.9 L603.0 207.0 L615.0 206.7 L627.0 206.4 L639.0 206.1 L651.0 206.0 L663.0 206.3 L675.0 206.7 L687.0 207.0 L699.0 207.0 L711.0 206.5 L723.0 205.6 L735.0 204.6 L747.0 203.5 L759.0 202.8 L771.0 202.5 L783.0 202.7 L795.0 203.2 L807.0 203.7 L819.0 204.1 L831.0 204.1 L843.0 204.0 L855.0 203.7 L867.0 203.6 L879.0 203.9 L891.0 204.5 L903.0 205.5 L915.0 206.6 L927.0 207.4 L939.0 207.8 L951.0 207.7 L963.0 207.2 L975.0 206.5 L987.0 205.8 L999.0 205.5 L1011.0 205.4 L1023.0 205.6 L1035.0 205.7 L1035.5 205.6 L1035.5 436.5 L255 436.5 Z" fill="#e69af1"/><path d="M255.0 215.3 L267.0 215.1 L279.0 215.1 L291.0 215.4 L303.0 216.2 L315.0 217.2 L327.0 218.1 L339.0 218.6 L351.0 218.5 L363.0 217.9 L375.0 217.1 L387.0 216.5 L399.0 216.1 L411.0 216.1 L423.0 216.3 L435.0 216.3 L447.0 216.0 L459.0 215.3 L471.0 214.4 L483.0 213.7 L495.0 213.3 L507.0 213.5 L519.0 214.2 L531.0 215.2 L543.0 216.0 L555.0 216.4 L567.0 216.5 L579.0 216.3 L591.0 216.2 L603.0 216.4 L615.0 217.0 L627.0 217.7 L639.0 218.4 L651.0 218.6 L663.0 218.3 L675.0 217.4 L687.0 216.4 L699.0 215.5 L711.0 215.0 L723.0 214.9 L735.0 215.1 L747.0 215.3 L759.0 215.3 L771.0 214.9 L783.0 214.3 L795.0 213.8 L807.0 213.7 L819.0 214.1 L831.0 215.0 L843.0 216.1 L855.0 217.1 L867.0 217.6 L879.0 217.7 L891.0 217.4 L903.0 217.0 L915.0 216.9 L927.0 217.1 L939.0 217.5 L951.0 217.8 L963.0 217.9 L975.0 217.4 L987.0 216.5 L999.0 215.4 L1011.0 214.4 L1023.0 213.9 L1035.0 213.9 L1035.5 214.3 L1035.5 436.5 L255 436.5 Z" fill="#c9c4f5"/><path d="M255.0 219.4 L267.0 219.8 L279.0 219.9 L291.0 219.8 L303.0 219.7 L315.0 219.6 L327.0 219.8 L339.0 220.2 L351.0 220.9 L363.0 221.7 L375.0 222.3 L387.0 222.7 L399.0 222.7 L411.0 222.2 L423.0 221.4 L435.0 220.5 L447.0 219.5 L459.0 218.8 L471.0 218.4 L483.0 218.3 L495.0 218.5 L507.0 218.7 L519.0 218.8 L531.0 218.7 L543.0 218.3 L555.0 217.8 L567.0 217.2 L579.0 216.7 L591.0 216.6 L603.0 216.8 L615.0 217.4 L627.0 218.3 L639.0 219.4 L651.0 220.3 L663.0 221.0 L675.0 221.4 L687.0 221.4 L699.0 221.1 L711.0 220.8 L723.0 220.6 L735.0 220.6 L747.0 220.8 L759.0 221.2 L771.0 221.7 L783.0 222.0 L795.0 221.9 L807.0 221.5 L819.0 220.8 L831.0 219.8 L843.0 218.7 L855.0 217.8 L867.0 217.2 L879.0 217.0 L891.0 217.1 L903.0 217.5 L915.0 218.0 L927.0 218.3 L939.0 218.4 L951.0 218.3 L963.0 218.1 L975.0 217.8 L987.0 217.6 L999.0 217.8 L1011.0 218.3 L1023.0 219.1 L1035.0 220.1 L1035.5 221.1 L1035.5 436.5 L255 436.5 Z" fill="#aee2f6"/><path d="M255.0 226.3 L267.0 226.7 L279.0 227.0 L291.0 227.1 L303.0 227.0 L315.0 226.8 L327.0 226.4 L339.0 226.0 L351.0 225.7 L363.0 225.6 L375.0 225.8 L387.0 226.4 L399.0 227.2 L411.0 228.3 L423.0 229.4 L435.0 230.4 L447.0 231.2 L459.0 231.7 L471.0 231.9 L483.0 231.7 L495.0 231.3 L507.0 230.8 L519.0 230.3 L531.0 229.9 L543.0 229.8 L555.0 229.8 L567.0 230.0 L579.0 230.3 L591.0 230.5 L603.0 230.6 L615.0 230.4 L627.0 229.9 L639.0 229.1 L651.0 228.2 L663.0 227.1 L675.0 226.1 L687.0 225.2 L699.0 224.7 L711.0 224.6 L723.0 224.8 L735.0 225.3 L747.0 226.0 L759.0 226.7 L771.0 227.2 L783.0 227.6 L795.0 227.8 L807.0 227.8 L819.0 227.6 L831.0 227.4 L843.0 227.3 L855.0 227.4 L867.0 227.8 L879.0 228.5 L891.0 229.4 L903.0 230.3 L915.0 231.3 L927.0 232.1 L939.0 232.5 L951.0 232.7 L963.0 232.4 L975.0 231.8 L987.0 231.0 L999.0 230.2 L1011.0 229.4 L1023.0 228.8 L1035.0 228.5 L1035.5 228.3 L1035.5 436.5 L255 436.5 Z" fill="#dcecf8"/><path d="M255.0 231.1 L267.0 232.3 L279.0 233.6 L291.0 234.8 L303.0 235.7 L315.0 236.2 L327.0 236.2 L339.0 235.8 L351.0 235.2 L363.0 234.6 L375.0 234.1 L387.0 233.8 L399.0 233.8 L411.0 234.0 L423.0 234.3 L435.0 234.6 L447.0 234.6 L459.0 234.2 L471.0 233.4 L483.0 232.4 L495.0 231.2 L507.0 229.9 L519.0 229.0 L531.0 228.4 L543.0 228.3 L555.0 228.6 L567.0 229.3 L579.0 230.1 L591.0 230.9 L603.0 231.5 L615.0 231.8 L627.0 231.9 L639.0 231.7 L651.0 231.5 L663.0 231.4 L675.0 231.6 L687.0 232.1 L699.0 232.9 L711.0 234.0 L723.0 235.1 L735.0 236.1 L747.0 236.8 L759.0 237.0 L771.0 236.7 L783.0 236.0 L795.0 235.1 L807.0 234.1 L819.0 233.2 L831.0 232.5 L843.0 232.2 L855.0 232.2 L867.0 232.3 L879.0 232.5 L891.0 232.6 L903.0 232.3 L915.0 231.8 L927.0 231.0 L939.0 230.0 L951.0 229.1 L963.0 228.4 L975.0 228.1 L987.0 228.2 L999.0 228.9 L1011.0 229.8 L1023.0 231.0 L1035.0 232.1 L1035.5 233.0 L1035.5 436.5 L255 436.5 Z" fill="#f3f3a6"/><path d="M255.0 240.0 L267.0 239.7 L279.0 239.3 L291.0 239.1 L303.0 239.3 L315.0 240.2 L327.0 241.6 L339.0 243.2 L351.0 244.5 L363.0 245.4 L375.0 245.6 L387.0 245.1 L399.0 244.2 L411.0 243.3 L423.0 242.6 L435.0 242.4 L447.0 242.5 L459.0 242.8 L471.0 243.0 L483.0 242.7 L495.0 241.9 L507.0 240.6 L519.0 239.2 L531.0 237.9 L543.0 237.2 L555.0 237.2 L567.0 237.8 L579.0 238.9 L591.0 240.0 L603.0 240.9 L615.0 241.4 L627.0 241.4 L639.0 241.2 L651.0 241.1 L663.0 241.2 L675.0 241.9 L687.0 243.0 L699.0 244.3 L711.0 245.4 L723.0 246.0 L735.0 245.8 L747.0 245.0 L759.0 243.7 L771.0 242.4 L783.0 241.3 L795.0 240.7 L807.0 240.5 L819.0 240.7 L831.0 241.0 L843.0 240.9 L855.0 240.5 L867.0 239.6 L879.0 238.5 L891.0 237.6 L903.0 237.2 L915.0 237.5 L927.0 238.5 L939.0 239.9 L951.0 241.4 L963.0 242.6 L975.0 243.3 L987.0 243.5 L999.0 243.3 L1011.0 242.9 L1023.0 242.7 L1035.0 242.9 L1035.5 243.5 L1035.5 436.5 L255 436.5 Z" fill="#f8cf8f"/><path d="M255.0 247.9 L267.0 248.0 L279.0 248.2 L291.0 248.4 L303.0 248.7 L315.0 248.8 L327.0 248.8 L339.0 248.7 L351.0 248.4 L363.0 248.1 L375.0 247.7 L387.0 247.3 L399.0 247.0 L411.0 246.9 L423.0 247.0 L435.0 247.3 L447.0 247.8 L459.0 248.5 L471.0 249.3 L483.0 250.2 L495.0 251.0 L507.0 251.7 L519.0 252.3 L531.0 252.7 L543.0 252.8 L555.0 252.8 L567.0 252.5 L579.0 252.2 L591.0 251.9 L603.0 251.6 L615.0 251.4 L627.0 251.3 L639.0 251.3 L651.0 251.5 L663.0 251.7 L675.0 252.0 L687.0 252.2 L699.0 252.4 L711.0 252.4 L723.0 252.1 L735.0 251.7 L747.0 251.1 L759.0 250.4 L771.0 249.5 L783.0 248.7 L795.0 247.9 L807.0 247.3 L819.0 246.9 L831.0 246.6 L843.0 246.6 L855.0 246.9 L867.0 247.2 L879.0 247.7 L891.0 248.1 L903.0 248.5 L915.0 248.8 L927.0 249.0 L939.0 249.0 L951.0 249.0 L963.0 248.8 L975.0 248.6 L987.0 248.5 L999.0 248.4 L1011.0 248.6 L1023.0 248.9 L1035.0 249.3 L1035.5 250.0 L1035.5 436.5 L255 436.5 Z" fill="#f6abd9"/><path d="M255.0 254.9 L267.0 254.7 L279.0 254.5 L291.0 254.1 L303.0 253.7 L315.0 253.2 L327.0 252.8 L339.0 252.3 L351.0 252.0 L363.0 251.7 L375.0 251.5 L387.0 251.4 L399.0 251.4 L411.0 251.6 L423.0 251.8 L435.0 252.0 L447.0 252.3 L459.0 252.5 L471.0 252.7 L483.0 252.8 L495.0 252.9 L507.0 252.9 L519.0 252.9 L531.0 252.8 L543.0 252.7 L555.0 252.6 L567.0 252.5 L579.0 252.6 L591.0 252.7 L603.0 252.9 L615.0 253.2 L627.0 253.6 L639.0 254.0 L651.0 254.4 L663.0 254.9 L675.0 255.2 L687.0 255.5 L699.0 255.7 L711.0 255.8 L723.0 255.8 L735.0 255.6 L747.0 255.4 L759.0 255.1 L771.0 254.8 L783.0 254.5 L795.0 254.2 L807.0 254.0 L819.0 253.8 L831.0 253.7 L843.0 253.7 L855.0 253.7 L867.0 253.8 L879.0 253.9 L891.0 253.9 L903.0 253.9 L915.0 253.8 L927.0 253.7 L939.0 253.5 L951.0 253.2 L963.0 252.8 L975.0 252.4 L987.0 252.0 L999.0 251.7 L1011.0 251.4 L1023.0 251.2 L1035.0 251.1 L1035.5 251.1 L1035.5 436.5 L255 436.5 Z" fill="#d0c2f0" opacity="0.55"/><path d="M255.0 254.6 L267.0 255.1 L279.0 255.8 L291.0 256.5 L303.0 257.0 L315.0 257.5 L327.0 257.7 L339.0 257.8 L351.0 257.7 L363.0 257.6 L375.0 257.5 L387.0 257.5 L399.0 257.7 L411.0 258.1 L423.0 258.6 L435.0 259.2 L447.0 259.8 L459.0 260.3 L471.0 260.7 L483.0 260.7 L495.0 260.5 L507.0 260.1 L519.0 259.4 L531.0 258.7 L543.0 257.9 L555.0 257.3 L567.0 256.8 L579.0 256.5 L591.0 256.5 L603.0 256.5 L615.0 256.7 L627.0 256.8 L639.0 256.9 L651.0 256.8 L663.0 256.5 L675.0 256.1 L687.0 255.5 L699.0 255.1 L711.0 254.7 L723.0 254.5 L735.0 254.6 L747.0 254.9 L759.0 255.5 L771.0 256.2 L783.0 257.1 L795.0 257.9 L807.0 258.5 L819.0 259.0 L831.0 259.2 L843.0 259.3 L855.0 259.1 L867.0 258.9 L879.0 258.7 L891.0 258.5 L903.0 258.5 L915.0 258.7 L927.0 259.0 L939.0 259.4 L951.0 259.8 L963.0 260.0 L975.0 260.1 L987.0 259.9 L999.0 259.4 L1011.0 258.8 L1023.0 258.0 L1035.0 257.1 L1035.5 256.3 L1035.5 436.5 L255 436.5 Z" fill="#f6a4cf"/><path d="M255.0 261.1 L267.0 261.1 L279.0 261.3 L291.0 261.6 L303.0 262.0 L315.0 262.4 L327.0 262.8 L339.0 263.2 L351.0 263.5 L363.0 263.7 L375.0 263.8 L387.0 263.8 L399.0 263.8 L411.0 263.7 L423.0 263.6 L435.0 263.5 L447.0 263.6 L459.0 263.7 L471.0 264.0 L483.0 264.4 L495.0 264.8 L507.0 265.3 L519.0 265.8 L531.0 266.3 L543.0 266.7 L555.0 266.9 L567.0 267.0 L579.0 266.9 L591.0 266.7 L603.0 266.3 L615.0 265.9 L627.0 265.3 L639.0 264.8 L651.0 264.4 L663.0 264.0 L675.0 263.7 L687.0 263.6 L699.0 263.5 L711.0 263.6 L723.0 263.6 L735.0 263.7 L747.0 263.8 L759.0 263.8 L771.0 263.7 L783.0 263.5 L795.0 263.2 L807.0 262.8 L819.0 262.4 L831.0 262.0 L843.0 261.6 L855.0 261.3 L867.0 261.1 L879.0 261.1 L891.0 261.3 L903.0 261.6 L915.0 262.0 L927.0 262.5 L939.0 263.1 L951.0 263.6 L963.0 264.2 L975.0 264.6 L987.0 264.9 L999.0 265.1 L1011.0 265.2 L1023.0 265.1 L1035.0 265.0 L1035.5 264.9 L1035.5 436.5 L255 436.5 Z" fill="#f7a9c4" opacity="0.8"/><path d="M255.0 270.4 L267.0 270.7 L279.0 271.1 L291.0 271.4 L303.0 271.5 L315.0 271.5 L327.0 271.3 L339.0 271.1 L351.0 270.9 L363.0 270.8 L375.0 270.9 L387.0 271.2 L399.0 271.8 L411.0 272.6 L423.0 273.4 L435.0 274.2 L447.0 274.8 L459.0 275.1 L471.0 275.2 L483.0 274.9 L495.0 274.5 L507.0 274.0 L519.0 273.6 L531.0 273.3 L543.0 273.2 L555.0 273.2 L567.0 273.3 L579.0 273.5 L591.0 273.6 L603.0 273.5 L615.0 273.2 L627.0 272.6 L639.0 271.9 L651.0 271.1 L663.0 270.4 L675.0 269.9 L687.0 269.6 L699.0 269.6 L711.0 269.9 L723.0 270.4 L735.0 271.0 L747.0 271.6 L759.0 272.1 L771.0 272.3 L783.0 272.4 L795.0 272.3 L807.0 272.2 L819.0 272.1 L831.0 272.2 L843.0 272.4 L855.0 272.9 L867.0 273.5 L879.0 274.2 L891.0 274.8 L903.0 275.3 L915.0 275.5 L927.0 275.4 L939.0 275.0 L951.0 274.4 L963.0 273.7 L975.0 273.0 L987.0 272.5 L999.0 272.1 L1011.0 272.0 L1023.0 272.0 L1035.0 272.1 L1035.5 272.2 L1035.5 436.5 L255 436.5 Z" fill="#f0a2ee"/><ellipse cx="330.0" cy="239.0" rx="60.0" ry="4.0" fill="#f9b98a" opacity="0.9"/><ellipse cx="420.0" cy="232.0" rx="55.0" ry="4.0" fill="#eef6ff" opacity="0.9"/><ellipse cx="580.0" cy="236.0" rx="70.0" ry="3.5" fill="#f8f7b0" opacity="0.9"/><ellipse cx="700.0" cy="243.0" rx="50.0" ry="3.5" fill="#f9b98a" opacity="0.8"/><ellipse cx="960.0" cy="232.0" rx="60.0" ry="4.5" fill="#eef6ff" opacity="0.9"/><ellipse cx="995.0" cy="243.0" rx="45.0" ry="3.5" fill="#f9b98a" opacity="0.9"/><ellipse cx="880.0" cy="236.0" rx="50.0" ry="3.0" fill="#f8f7b0" opacity="0.8"/><ellipse cx="300.0" cy="225.0" rx="40.0" ry="3.0" fill="#9fe0f5" opacity="0.8"/><ellipse cx="760.0" cy="224.0" rx="60.0" ry="3.0" fill="#9fe0f5" opacity="0.7"/><ellipse cx="500.0" cy="262.0" rx="80.0" ry="4.0" fill="#f9a6b8" opacity="0.6"/><ellipse cx="820.0" cy="262.0" rx="70.0" ry="4.0" fill="#f9a6b8" opacity="0.6"/><ellipse cx="640.0" cy="252.0" rx="90.0" ry="3.0" fill="#c8c6f2" opacity="0.5"/><ellipse cx="290.0" cy="262.0" rx="40.0" ry="5.0" fill="#f7b08c" opacity="0.7"/><ellipse cx="1000.0" cy="262.0" rx="40.0" ry="4.0" fill="#f7b08c" opacity="0.6"/><ellipse cx="380.0" cy="203.0" rx="70.0" ry="4.0" fill="#e896ea" opacity="0.8"/><ellipse cx="860.0" cy="198.0" rx="80.0" ry="4.0" fill="#e58ee8" opacity="0.7"/><ellipse cx="990.0" cy="202.0" rx="50.0" ry="4.0" fill="#ec98ea" opacity="0.8"/><circle cx="256.5" cy="88.5" r="1.90" fill="#fff" opacity=".22"/><circle cx="256.5" cy="88.5" r="1.10" fill="#fff" opacity=".85"/><circle cx="280" cy="103" r="1.90" fill="#fff" opacity=".22"/><circle cx="280" cy="103" r="1.10" fill="#fff" opacity=".85"/><circle cx="338.6" cy="100.6" r="2.28" fill="#fff" opacity=".22"/><circle cx="338.6" cy="100.6" r="1.32" fill="#fff" opacity=".85"/><circle cx="395" cy="93" r="2.28" fill="#fff" opacity=".22"/><circle cx="395" cy="93" r="1.32" fill="#fff" opacity=".85"/><circle cx="418" cy="99" r="1.90" fill="#fff" opacity=".22"/><circle cx="418" cy="99" r="1.10" fill="#fff" opacity=".85"/><circle cx="303" cy="109" r="1.90" fill="#fff" opacity=".22"/><circle cx="303" cy="109" r="1.10" fill="#fff" opacity=".85"/><circle cx="293" cy="120" r="2.47" fill="#fff" opacity=".22"/><circle cx="293" cy="120" r="1.43" fill="#fff" opacity=".85"/><circle cx="259" cy="135" r="1.90" fill="#fff" opacity=".22"/><circle cx="259" cy="135" r="1.10" fill="#fff" opacity=".85"/><circle cx="343" cy="130" r="2.47" fill="#fff" opacity=".22"/><circle cx="343" cy="130" r="1.43" fill="#fff" opacity=".85"/><circle cx="314" cy="145" r="1.90" fill="#fff" opacity=".22"/><circle cx="314" cy="145" r="1.10" fill="#fff" opacity=".85"/><circle cx="259" cy="157" r="1.90" fill="#fff" opacity=".22"/><circle cx="259" cy="157" r="1.10" fill="#fff" opacity=".85"/><circle cx="273" cy="164" r="2.28" fill="#fff" opacity=".22"/><circle cx="273" cy="164" r="1.32" fill="#fff" opacity=".85"/><circle cx="314" cy="163" r="1.90" fill="#fff" opacity=".22"/><circle cx="314" cy="163" r="1.10" fill="#fff" opacity=".85"/><circle cx="330" cy="156" r="2.47" fill="#fff" opacity=".22"/><circle cx="330" cy="156" r="1.43" fill="#fff" opacity=".85"/><circle cx="304" cy="180" r="1.90" fill="#fff" opacity=".22"/><circle cx="304" cy="180" r="1.10" fill="#fff" opacity=".85"/><circle cx="370" cy="184" r="2.28" fill="#fff" opacity=".22"/><circle cx="370" cy="184" r="1.32" fill="#fff" opacity=".85"/><circle cx="350" cy="207" r="2.28" fill="#fff" opacity=".22"/><circle cx="350" cy="207" r="1.32" fill="#fff" opacity=".85"/><circle cx="293" cy="191" r="2.28" fill="#fff" opacity=".22"/><circle cx="293" cy="191" r="1.32" fill="#fff" opacity=".85"/><circle cx="322" cy="203" r="1.90" fill="#fff" opacity=".22"/><circle cx="322" cy="203" r="1.10" fill="#fff" opacity=".85"/><circle cx="401" cy="205" r="2.47" fill="#fff" opacity=".22"/><circle cx="401" cy="205" r="1.43" fill="#fff" opacity=".85"/><circle cx="467" cy="92" r="2.28" fill="#fff" opacity=".22"/><circle cx="467" cy="92" r="1.32" fill="#fff" opacity=".85"/><circle cx="506" cy="90" r="2.28" fill="#fff" opacity=".22"/><circle cx="506" cy="90" r="1.32" fill="#fff" opacity=".85"/><circle cx="542" cy="88" r="1.90" fill="#fff" opacity=".22"/><circle cx="542" cy="88" r="1.10" fill="#fff" opacity=".85"/><circle cx="419" cy="99" r="2.28" fill="#fff" opacity=".22"/><circle cx="419" cy="99" r="1.32" fill="#fff" opacity=".85"/><circle cx="490" cy="107" r="1.90" fill="#fff" opacity=".22"/><circle cx="490" cy="107" r="1.10" fill="#fff" opacity=".85"/><circle cx="375" cy="109" r="1.90" fill="#fff" opacity=".22"/><circle cx="375" cy="109" r="1.10" fill="#fff" opacity=".85"/><circle cx="458" cy="113" r="2.28" fill="#fff" opacity=".22"/><circle cx="458" cy="113" r="1.32" fill="#fff" opacity=".85"/><circle cx="410" cy="120" r="1.90" fill="#fff" opacity=".22"/><circle cx="410" cy="120" r="1.10" fill="#fff" opacity=".85"/><circle cx="471" cy="123" r="1.90" fill="#fff" opacity=".22"/><circle cx="471" cy="123" r="1.10" fill="#fff" opacity=".85"/><circle cx="440" cy="135" r="1.90" fill="#fff" opacity=".22"/><circle cx="440" cy="135" r="1.10" fill="#fff" opacity=".85"/><circle cx="481" cy="137" r="1.90" fill="#fff" opacity=".22"/><circle cx="481" cy="137" r="1.10" fill="#fff" opacity=".85"/><circle cx="510" cy="135" r="1.90" fill="#fff" opacity=".22"/><circle cx="510" cy="135" r="1.10" fill="#fff" opacity=".85"/><circle cx="379" cy="164" r="1.90" fill="#fff" opacity=".22"/><circle cx="379" cy="164" r="1.10" fill="#fff" opacity=".85"/><circle cx="400" cy="166" r="2.28" fill="#fff" opacity=".22"/><circle cx="400" cy="166" r="1.32" fill="#fff" opacity=".85"/><circle cx="436" cy="162" r="2.28" fill="#fff" opacity=".22"/><circle cx="436" cy="162" r="1.32" fill="#fff" opacity=".85"/><circle cx="475" cy="162" r="1.90" fill="#fff" opacity=".22"/><circle cx="475" cy="162" r="1.10" fill="#fff" opacity=".85"/><circle cx="503" cy="159" r="1.90" fill="#fff" opacity=".22"/><circle cx="503" cy="159" r="1.10" fill="#fff" opacity=".85"/><circle cx="422" cy="170" r="2.28" fill="#fff" opacity=".22"/><circle cx="422" cy="170" r="1.32" fill="#fff" opacity=".85"/><circle cx="485" cy="179" r="1.90" fill="#fff" opacity=".22"/><circle cx="485" cy="179" r="1.10" fill="#fff" opacity=".85"/><circle cx="515" cy="179" r="1.90" fill="#fff" opacity=".22"/><circle cx="515" cy="179" r="1.10" fill="#fff" opacity=".85"/><circle cx="435" cy="195" r="2.47" fill="#fff" opacity=".22"/><circle cx="435" cy="195" r="1.43" fill="#fff" opacity=".85"/><circle cx="470" cy="201" r="1.90" fill="#fff" opacity=".22"/><circle cx="470" cy="201" r="1.10" fill="#fff" opacity=".85"/><circle cx="515" cy="198" r="1.90" fill="#fff" opacity=".22"/><circle cx="515" cy="198" r="1.10" fill="#fff" opacity=".85"/><circle cx="566" cy="102" r="2.28" fill="#fff" opacity=".22"/><circle cx="566" cy="102" r="1.32" fill="#fff" opacity=".85"/><circle cx="624" cy="101" r="2.28" fill="#fff" opacity=".22"/><circle cx="624" cy="101" r="1.32" fill="#fff" opacity=".85"/><circle cx="579" cy="120" r="2.28" fill="#fff" opacity=".22"/><circle cx="579" cy="120" r="1.32" fill="#fff" opacity=".85"/><circle cx="526" cy="115" r="1.90" fill="#fff" opacity=".22"/><circle cx="526" cy="115" r="1.10" fill="#fff" opacity=".85"/><circle cx="705" cy="100" r="1.90" fill="#fff" opacity=".22"/><circle cx="705" cy="100" r="1.10" fill="#fff" opacity=".85"/><circle cx="708" cy="113" r="2.47" fill="#fff" opacity=".22"/><circle cx="708" cy="113" r="1.43" fill="#fff" opacity=".85"/><circle cx="661" cy="127" r="1.90" fill="#fff" opacity=".22"/><circle cx="661" cy="127" r="1.10" fill="#fff" opacity=".85"/><circle cx="753" cy="94" r="2.28" fill="#fff" opacity=".22"/><circle cx="753" cy="94" r="1.32" fill="#fff" opacity=".85"/><circle cx="792" cy="90" r="2.28" fill="#fff" opacity=".22"/><circle cx="792" cy="90" r="1.32" fill="#fff" opacity=".85"/><circle cx="827" cy="88" r="1.90" fill="#fff" opacity=".22"/><circle cx="827" cy="88" r="1.10" fill="#fff" opacity=".85"/><circle cx="851" cy="103" r="1.90" fill="#fff" opacity=".22"/><circle cx="851" cy="103" r="1.10" fill="#fff" opacity=".85"/><circle cx="744" cy="108" r="1.90" fill="#fff" opacity=".22"/><circle cx="744" cy="108" r="1.10" fill="#fff" opacity=".85"/><circle cx="775" cy="107" r="1.90" fill="#fff" opacity=".22"/><circle cx="775" cy="107" r="1.10" fill="#fff" opacity=".85"/><circle cx="812" cy="117" r="2.28" fill="#fff" opacity=".22"/><circle cx="812" cy="117" r="1.32" fill="#fff" opacity=".85"/><circle cx="864" cy="119" r="2.28" fill="#fff" opacity=".22"/><circle cx="864" cy="119" r="1.32" fill="#fff" opacity=".85"/><circle cx="758" cy="124" r="1.90" fill="#fff" opacity=".22"/><circle cx="758" cy="124" r="1.10" fill="#fff" opacity=".85"/><circle cx="914" cy="100" r="2.47" fill="#fff" opacity=".22"/><circle cx="914" cy="100" r="1.43" fill="#fff" opacity=".85"/><circle cx="946" cy="109" r="1.90" fill="#fff" opacity=".22"/><circle cx="946" cy="109" r="1.10" fill="#fff" opacity=".85"/><circle cx="990" cy="99" r="2.28" fill="#fff" opacity=".22"/><circle cx="990" cy="99" r="1.32" fill="#fff" opacity=".85"/><circle cx="1029" cy="113" r="2.28" fill="#fff" opacity=".22"/><circle cx="1029" cy="113" r="1.32" fill="#fff" opacity=".85"/><circle cx="981" cy="120" r="1.90" fill="#fff" opacity=".22"/><circle cx="981" cy="120" r="1.10" fill="#fff" opacity=".85"/><circle cx="1010" cy="135" r="2.28" fill="#fff" opacity=".22"/><circle cx="1010" cy="135" r="1.32" fill="#fff" opacity=".85"/><circle cx="724" cy="136" r="1.90" fill="#fff" opacity=".22"/><circle cx="724" cy="136" r="1.10" fill="#fff" opacity=".85"/><circle cx="767" cy="135" r="1.90" fill="#fff" opacity=".22"/><circle cx="767" cy="135" r="1.10" fill="#fff" opacity=".85"/><circle cx="830" cy="135" r="1.90" fill="#fff" opacity=".22"/><circle cx="830" cy="135" r="1.10" fill="#fff" opacity=".85"/><circle cx="885" cy="145" r="2.28" fill="#fff" opacity=".22"/><circle cx="885" cy="145" r="1.32" fill="#fff" opacity=".85"/><circle cx="760" cy="160" r="2.28" fill="#fff" opacity=".22"/><circle cx="760" cy="160" r="1.32" fill="#fff" opacity=".85"/><circle cx="787" cy="157" r="1.90" fill="#fff" opacity=".22"/><circle cx="787" cy="157" r="1.10" fill="#fff" opacity=".85"/><circle cx="844" cy="165" r="2.28" fill="#fff" opacity=".22"/><circle cx="844" cy="165" r="1.32" fill="#fff" opacity=".85"/><circle cx="902" cy="156" r="2.47" fill="#fff" opacity=".22"/><circle cx="902" cy="156" r="1.43" fill="#fff" opacity=".85"/><circle cx="948" cy="155" r="1.90" fill="#fff" opacity=".22"/><circle cx="948" cy="155" r="1.10" fill="#fff" opacity=".85"/><circle cx="958" cy="164" r="2.28" fill="#fff" opacity=".22"/><circle cx="958" cy="164" r="1.32" fill="#fff" opacity=".85"/><circle cx="980" cy="166" r="2.47" fill="#fff" opacity=".22"/><circle cx="980" cy="166" r="1.43" fill="#fff" opacity=".85"/><circle cx="1006" cy="162" r="1.90" fill="#fff" opacity=".22"/><circle cx="1006" cy="162" r="1.10" fill="#fff" opacity=".85"/><circle cx="801" cy="179" r="1.90" fill="#fff" opacity=".22"/><circle cx="801" cy="179" r="1.10" fill="#fff" opacity=".85"/><circle cx="828" cy="179" r="1.90" fill="#fff" opacity=".22"/><circle cx="828" cy="179" r="1.10" fill="#fff" opacity=".85"/><circle cx="875" cy="180" r="1.90" fill="#fff" opacity=".22"/><circle cx="875" cy="180" r="1.10" fill="#fff" opacity=".85"/><circle cx="915" cy="184" r="1.90" fill="#fff" opacity=".22"/><circle cx="915" cy="184" r="1.10" fill="#fff" opacity=".85"/><circle cx="940" cy="184" r="2.28" fill="#fff" opacity=".22"/><circle cx="940" cy="184" r="1.32" fill="#fff" opacity=".85"/><circle cx="992" cy="186" r="2.28" fill="#fff" opacity=".22"/><circle cx="992" cy="186" r="1.32" fill="#fff" opacity=".85"/><circle cx="1005" cy="195" r="2.47" fill="#fff" opacity=".22"/><circle cx="1005" cy="195" r="1.43" fill="#fff" opacity=".85"/><circle cx="864" cy="191" r="2.28" fill="#fff" opacity=".22"/><circle cx="864" cy="191" r="1.32" fill="#fff" opacity=".85"/><circle cx="799" cy="198" r="2.28" fill="#fff" opacity=".22"/><circle cx="799" cy="198" r="1.32" fill="#fff" opacity=".85"/><circle cx="822" cy="202" r="1.90" fill="#fff" opacity=".22"/><circle cx="822" cy="202" r="1.10" fill="#fff" opacity=".85"/><circle cx="655" cy="185" r="1.90" fill="#fff" opacity=".22"/><circle cx="655" cy="185" r="1.10" fill="#fff" opacity=".85"/><circle cx="660" cy="196" r="2.47" fill="#fff" opacity=".22"/><circle cx="660" cy="196" r="1.43" fill="#fff" opacity=".85"/><circle cx="687" cy="206" r="2.28" fill="#fff" opacity=".22"/><circle cx="687" cy="206" r="1.32" fill="#fff" opacity=".85"/><circle cx="902" cy="156" r="1.90" fill="#fff" opacity=".22"/><circle cx="902" cy="156" r="1.10" fill="#fff" opacity=".85"/><circle cx="941" cy="185" r="2.28" fill="#fff" opacity=".22"/><circle cx="941" cy="185" r="1.32" fill="#fff" opacity=".85"/><circle cx="917" cy="194" r="1.90" fill="#fff" opacity=".22"/><circle cx="917" cy="194" r="1.10" fill="#fff" opacity=".85"/><circle cx="972" cy="207" r="2.28" fill="#fff" opacity=".22"/><circle cx="972" cy="207" r="1.32" fill="#fff" opacity=".85"/><circle cx="885" cy="204" r="1.90" fill="#fff" opacity=".22"/><circle cx="885" cy="204" r="1.10" fill="#fff" opacity=".85"/><circle cx="1020" cy="172" r="1.90" fill="#fff" opacity=".22"/><circle cx="1020" cy="172" r="1.10" fill="#fff" opacity=".85"/><circle cx="563" cy="180" r="2.09" fill="#fff" opacity=".22"/><circle cx="563" cy="180" r="1.21" fill="#fff" opacity=".85"/><circle cx="600" cy="195" r="1.90" fill="#fff" opacity=".22"/><circle cx="600" cy="195" r="1.10" fill="#fff" opacity=".85"/><linearGradient id="mg" x1="0" y1="0" x2="0" y2="1"><stop offset="0" stop-color="#cfa5da"/><stop offset=".45" stop-color="#b698d2"/><stop offset="1" stop-color="#a28fcb"/></linearGradient><path d="M255.0 293.5 L265.0 293.2 L280.0 300.0 L296.0 307.6 L310.0 304.5 L322.0 303.0 L340.0 300.5 L363.0 298.0 L377.0 302.5 L397.0 295.4 L413.0 298.0 L432.0 289.5 L450.0 295.0 L466.0 291.5 L482.0 288.3 L499.0 291.5 L509.0 288.5 L520.0 286.3 L535.0 291.0 L548.0 293.0 L570.0 298.5 L598.0 301.0 L615.0 300.5 L629.0 299.4 L645.0 302.0 L660.0 303.0 L671.0 301.0 L690.0 297.0 L705.0 293.0 L718.0 290.0 L730.0 293.0 L743.0 294.7 L755.0 291.0 L765.0 288.4 L775.0 290.5 L784.0 291.5 L793.0 288.5 L800.3 285.2 L812.5 292.0 L830.0 298.0 L860.0 304.0 L896.8 306.6 L910.0 303.0 L922.0 300.5 L934.4 298.4 L948.6 300.5 L958.0 297.0 L967.0 294.4 L975.0 296.5 L983.0 298.4 L993.0 293.5 L1002.4 289.3 L1011.0 293.0 L1019.7 296.4 L1028.0 298.5 L1036.0 300.0 L1036.0 342.0 L255.0 342.0 Z" fill="url(#mg)"/><clipPath id="mclip"><path d="M255.0 293.5 L265.0 293.2 L280.0 300.0 L296.0 307.6 L310.0 304.5 L322.0 303.0 L340.0 300.5 L363.0 298.0 L377.0 302.5 L397.0 295.4 L413.0 298.0 L432.0 289.5 L450.0 295.0 L466.0 291.5 L482.0 288.3 L499.0 291.5 L509.0 288.5 L520.0 286.3 L535.0 291.0 L548.0 293.0 L570.0 298.5 L598.0 301.0 L615.0 300.5 L629.0 299.4 L645.0 302.0 L660.0 303.0 L671.0 301.0 L690.0 297.0 L705.0 293.0 L718.0 290.0 L730.0 293.0 L743.0 294.7 L755.0 291.0 L765.0 288.4 L775.0 290.5 L784.0 291.5 L793.0 288.5 L800.3 285.2 L812.5 292.0 L830.0 298.0 L860.0 304.0 L896.8 306.6 L910.0 303.0 L922.0 300.5 L934.4 298.4 L948.6 300.5 L958.0 297.0 L967.0 294.4 L975.0 296.5 L983.0 298.4 L993.0 293.5 L1002.4 289.3 L1011.0 293.0 L1019.7 296.4 L1028.0 298.5 L1036.0 300.0 L1036.0 342.0 L255.0 342.0 Z"/></clipPath><g clip-path="url(#mclip)"><path d="M265.0 293.2 L310.0 334.0 L275.5 334.0 L268.6 311.6 Z" fill="#8c7ebf" opacity=".55"/><path d="M265.0 293.2 L217.0 334.0 L247.0 334.0 L262.0 309.5 Z" fill="#dcaedb" opacity=".6"/><path d="M268.6 311.6 L275.5 334.0 L247.0 334.0 L262.0 309.5 Z" fill="#b99bd3" opacity=".5"/><path d="M322.0 303.0 L355.0 334.0 L329.7 334.0 L324.6 316.9 Z" fill="#8c7ebf" opacity=".55"/><path d="M322.0 303.0 L286.8 334.0 L308.8 334.0 L319.8 315.4 Z" fill="#dcaedb" opacity=".6"/><path d="M324.6 316.9 L329.7 334.0 L308.8 334.0 L319.8 315.4 Z" fill="#b99bd3" opacity=".5"/><path d="M363.0 298.0 L405.0 334.0 L372.8 334.0 L366.4 314.2 Z" fill="#8c7ebf" opacity=".55"/><path d="M363.0 298.0 L318.2 334.0 L346.2 334.0 L360.2 312.4 Z" fill="#dcaedb" opacity=".6"/><path d="M366.4 314.2 L372.8 334.0 L346.2 334.0 L360.2 312.4 Z" fill="#b99bd3" opacity=".5"/><path d="M397.0 295.4 L436.0 334.0 L406.1 334.0 L400.1 312.8 Z" fill="#8c7ebf" opacity=".55"/><path d="M397.0 295.4 L355.4 334.0 L381.4 334.0 L394.4 310.8 Z" fill="#dcaedb" opacity=".6"/><path d="M400.1 312.8 L406.1 334.0 L381.4 334.0 L394.4 310.8 Z" fill="#b99bd3" opacity=".5"/><path d="M432.0 289.5 L483.0 334.0 L443.9 334.0 L436.1 309.5 Z" fill="#8c7ebf" opacity=".55"/><path d="M432.0 289.5 L377.6 334.0 L411.6 334.0 L428.6 307.3 Z" fill="#dcaedb" opacity=".6"/><path d="M436.1 309.5 L443.9 334.0 L411.6 334.0 L428.6 307.3 Z" fill="#b99bd3" opacity=".5"/><path d="M482.0 288.3 L527.0 334.0 L492.5 334.0 L485.6 308.9 Z" fill="#8c7ebf" opacity=".55"/><path d="M482.0 288.3 L434.0 334.0 L464.0 334.0 L479.0 306.6 Z" fill="#dcaedb" opacity=".6"/><path d="M485.6 308.9 L492.5 334.0 L464.0 334.0 L479.0 306.6 Z" fill="#b99bd3" opacity=".5"/><path d="M520.0 286.3 L574.0 334.0 L532.6 334.0 L524.3 307.8 Z" fill="#8c7ebf" opacity=".55"/><path d="M520.0 286.3 L462.4 334.0 L498.4 334.0 L516.4 305.4 Z" fill="#dcaedb" opacity=".6"/><path d="M524.3 307.8 L532.6 334.0 L498.4 334.0 L516.4 305.4 Z" fill="#b99bd3" opacity=".5"/><path d="M560.0 296.0 L593.0 334.0 L567.7 334.0 L562.6 313.1 Z" fill="#8c7ebf" opacity=".55"/><path d="M560.0 296.0 L524.8 334.0 L546.8 334.0 L557.8 311.2 Z" fill="#dcaedb" opacity=".6"/><path d="M562.6 313.1 L567.7 334.0 L546.8 334.0 L557.8 311.2 Z" fill="#b99bd3" opacity=".5"/><path d="M598.0 301.0 L634.0 334.0 L606.4 334.0 L600.9 315.9 Z" fill="#8c7ebf" opacity=".55"/><path d="M598.0 301.0 L559.6 334.0 L583.6 334.0 L595.6 314.2 Z" fill="#dcaedb" opacity=".6"/><path d="M600.9 315.9 L606.4 334.0 L583.6 334.0 L595.6 314.2 Z" fill="#b99bd3" opacity=".5"/><path d="M629.0 299.4 L665.0 334.0 L637.4 334.0 L631.9 315.0 Z" fill="#8c7ebf" opacity=".55"/><path d="M629.0 299.4 L590.6 334.0 L614.6 334.0 L626.6 313.2 Z" fill="#dcaedb" opacity=".6"/><path d="M631.9 315.0 L637.4 334.0 L614.6 334.0 L626.6 313.2 Z" fill="#b99bd3" opacity=".5"/><path d="M671.0 301.0 L707.0 334.0 L679.4 334.0 L673.9 315.9 Z" fill="#8c7ebf" opacity=".55"/><path d="M671.0 301.0 L632.6 334.0 L656.6 334.0 L668.6 314.2 Z" fill="#dcaedb" opacity=".6"/><path d="M673.9 315.9 L679.4 334.0 L656.6 334.0 L668.6 314.2 Z" fill="#b99bd3" opacity=".5"/><path d="M718.0 290.0 L766.0 334.0 L729.2 334.0 L721.8 309.8 Z" fill="#8c7ebf" opacity=".55"/><path d="M718.0 290.0 L666.8 334.0 L698.8 334.0 L714.8 307.6 Z" fill="#dcaedb" opacity=".6"/><path d="M721.8 309.8 L729.2 334.0 L698.8 334.0 L714.8 307.6 Z" fill="#b99bd3" opacity=".5"/><path d="M765.0 288.4 L810.0 334.0 L775.5 334.0 L768.6 308.9 Z" fill="#8c7ebf" opacity=".55"/><path d="M765.0 288.4 L717.0 334.0 L747.0 334.0 L762.0 306.6 Z" fill="#dcaedb" opacity=".6"/><path d="M768.6 308.9 L775.5 334.0 L747.0 334.0 L762.0 306.6 Z" fill="#b99bd3" opacity=".5"/><path d="M800.3 285.2 L854.3 334.0 L812.9 334.0 L804.6 307.2 Z" fill="#8c7ebf" opacity=".55"/><path d="M800.3 285.2 L742.7 334.0 L778.7 334.0 L796.7 304.7 Z" fill="#dcaedb" opacity=".6"/><path d="M804.6 307.2 L812.9 334.0 L778.7 334.0 L796.7 304.7 Z" fill="#b99bd3" opacity=".5"/><path d="M905.0 305.0 L938.0 334.0 L912.7 334.0 L907.6 318.1 Z" fill="#8c7ebf" opacity=".55"/><path d="M905.0 305.0 L869.8 334.0 L891.8 334.0 L902.8 316.6 Z" fill="#dcaedb" opacity=".6"/><path d="M907.6 318.1 L912.7 334.0 L891.8 334.0 L902.8 316.6 Z" fill="#b99bd3" opacity=".5"/><path d="M934.4 298.4 L973.4 334.0 L943.5 334.0 L937.5 314.4 Z" fill="#8c7ebf" opacity=".55"/><path d="M934.4 298.4 L892.8 334.0 L918.8 334.0 L931.8 312.6 Z" fill="#dcaedb" opacity=".6"/><path d="M937.5 314.4 L943.5 334.0 L918.8 334.0 L931.8 312.6 Z" fill="#b99bd3" opacity=".5"/><path d="M967.0 294.4 L1009.0 334.0 L976.8 334.0 L970.4 312.2 Z" fill="#8c7ebf" opacity=".55"/><path d="M967.0 294.4 L922.2 334.0 L950.2 334.0 L964.2 310.2 Z" fill="#dcaedb" opacity=".6"/><path d="M970.4 312.2 L976.8 334.0 L950.2 334.0 L964.2 310.2 Z" fill="#b99bd3" opacity=".5"/><path d="M1002.4 289.3 L1053.4 334.0 L1014.3 334.0 L1006.5 309.4 Z" fill="#8c7ebf" opacity=".55"/><path d="M1002.4 289.3 L948.0 334.0 L982.0 334.0 L999.0 307.2 Z" fill="#dcaedb" opacity=".6"/><path d="M1006.5 309.4 L1014.3 334.0 L982.0 334.0 L999.0 307.2 Z" fill="#b99bd3" opacity=".5"/><path d="M1030.0 298.0 L1066.0 334.0 L1038.4 334.0 L1032.9 314.2 Z" fill="#8c7ebf" opacity=".55"/><path d="M1030.0 298.0 L991.6 334.0 L1015.6 334.0 L1027.6 312.4 Z" fill="#dcaedb" opacity=".6"/><path d="M1032.9 314.2 L1038.4 334.0 L1015.6 334.0 L1027.6 312.4 Z" fill="#b99bd3" opacity=".5"/></g><path d="M255.0 294.3 L265.0 294.0 L280.0 300.8 L296.0 308.4 L310.0 305.3 L322.0 303.8 L340.0 301.3 L363.0 298.8 L377.0 303.3 L397.0 296.2 L413.0 298.8 L432.0 290.3 L450.0 295.8 L466.0 292.3 L482.0 289.1 L499.0 292.3 L509.0 289.3 L520.0 287.1 L535.0 291.8 L548.0 293.8 L570.0 299.3 L598.0 301.8 L615.0 301.3 L629.0 300.2 L645.0 302.8 L660.0 303.8 L671.0 301.8 L690.0 297.8 L705.0 293.8 L718.0 290.8 L730.0 293.8 L743.0 295.5 L755.0 291.8 L765.0 289.2 L775.0 291.3 L784.0 292.3 L793.0 289.3 L800.3 286.0 L812.5 292.8 L830.0 298.8 L860.0 304.8 L896.8 307.4 L910.0 303.8 L922.0 301.3 L934.4 299.2 L948.6 301.3 L958.0 297.8 L967.0 295.2 L975.0 297.3 L983.0 299.2 L993.0 294.3 L1002.4 290.1 L1011.0 293.8 L1019.7 297.2 L1028.0 299.3 L1036.0 300.8" fill="none" stroke="#e6bbe2" stroke-width="1.400" opacity=".6" stroke-linejoin="round"/><path d="M255.0 318.0 L330.0 322.0 L420.0 316.0 L520.0 320.0 L640.0 318.0 L760.0 321.0 L900.0 319.0 L1036.0 322.0 L1036.0 342.0 L255.0 342.0 Z" fill="#a38fcb" opacity=".65"/><ellipse cx="262.0" cy="333.6" rx="5.1" ry="6.0" fill="#45a79a"/><ellipse cx="261.2" cy="332.0" rx="4.3" ry="4.8" fill="#76d0a4"/><ellipse cx="260.5" cy="330.6" rx="2.8" ry="3.0" fill="#b0ecb6"/><ellipse cx="270.0" cy="334.5" rx="4.2" ry="5.0" fill="#45a79a"/><ellipse cx="269.4" cy="333.2" rx="3.6" ry="4.0" fill="#76d0a4"/><ellipse cx="268.7" cy="332.0" rx="2.3" ry="2.5" fill="#b0ecb6"/><ellipse cx="281.0" cy="332.1" rx="5.5" ry="6.5" fill="#45a79a"/><ellipse cx="280.2" cy="330.5" rx="4.7" ry="5.2" fill="#76d0a4"/><ellipse cx="279.3" cy="328.9" rx="3.0" ry="3.2" fill="#b0ecb6"/><ellipse cx="291.0" cy="332.6" rx="5.1" ry="6.0" fill="#45a79a"/><ellipse cx="290.2" cy="331.0" rx="4.3" ry="4.8" fill="#76d0a4"/><ellipse cx="289.5" cy="329.6" rx="2.8" ry="3.0" fill="#b0ecb6"/><ellipse cx="299.0" cy="333.5" rx="4.2" ry="5.0" fill="#45a79a"/><ellipse cx="298.4" cy="332.2" rx="3.6" ry="4.0" fill="#76d0a4"/><ellipse cx="297.7" cy="331.0" rx="2.3" ry="2.5" fill="#b0ecb6"/><ellipse cx="308.0" cy="334.9" rx="3.0" ry="3.5" fill="#45a79a"/><ellipse cx="307.6" cy="333.9" rx="2.5" ry="2.8" fill="#76d0a4"/><ellipse cx="307.1" cy="333.1" rx="1.6" ry="1.8" fill="#b0ecb6"/><ellipse cx="324.0" cy="335.3" rx="2.5" ry="3.0" fill="#45a79a"/><ellipse cx="323.6" cy="334.5" rx="2.2" ry="2.4" fill="#76d0a4"/><ellipse cx="323.2" cy="333.8" rx="1.4" ry="1.5" fill="#b0ecb6"/><ellipse cx="399.0" cy="331.1" rx="4.2" ry="5.5" fill="#45a79a"/><ellipse cx="398.4" cy="329.6" rx="3.6" ry="4.4" fill="#76d0a4"/><ellipse cx="397.7" cy="328.3" rx="2.3" ry="2.8" fill="#b0ecb6"/><ellipse cx="406.0" cy="331.9" rx="3.8" ry="4.5" fill="#45a79a"/><ellipse cx="405.4" cy="330.8" rx="3.3" ry="3.6" fill="#76d0a4"/><ellipse cx="404.9" cy="329.7" rx="2.1" ry="2.2" fill="#b0ecb6"/><ellipse cx="420.0" cy="332.8" rx="5.1" ry="8.0" fill="#45a79a"/><ellipse cx="419.2" cy="330.7" rx="4.3" ry="6.4" fill="#76d0a4"/><ellipse cx="418.5" cy="328.8" rx="2.8" ry="4.0" fill="#b0ecb6"/><ellipse cx="430.0" cy="332.4" rx="5.5" ry="9.5" fill="#45a79a"/><ellipse cx="429.2" cy="330.0" rx="4.7" ry="7.6" fill="#76d0a4"/><ellipse cx="428.3" cy="327.7" rx="3.0" ry="4.8" fill="#b0ecb6"/><ellipse cx="440.0" cy="334.2" rx="5.1" ry="7.5" fill="#45a79a"/><ellipse cx="439.2" cy="332.3" rx="4.3" ry="6.0" fill="#76d0a4"/><ellipse cx="438.5" cy="330.5" rx="2.8" ry="3.8" fill="#b0ecb6"/><ellipse cx="449.0" cy="335.6" rx="4.2" ry="6.0" fill="#45a79a"/><ellipse cx="448.4" cy="334.0" rx="3.6" ry="4.8" fill="#76d0a4"/><ellipse cx="447.7" cy="332.6" rx="2.3" ry="3.0" fill="#b0ecb6"/><ellipse cx="461.0" cy="328.4" rx="5.5" ry="9.5" fill="#45a79a"/><ellipse cx="460.2" cy="326.0" rx="4.7" ry="7.6" fill="#76d0a4"/><ellipse cx="459.3" cy="323.7" rx="3.0" ry="4.8" fill="#b0ecb6"/><ellipse cx="472.0" cy="326.6" rx="6.0" ry="11.5" fill="#45a79a"/><ellipse cx="471.1" cy="323.7" rx="5.1" ry="9.2" fill="#76d0a4"/><ellipse cx="470.2" cy="320.9" rx="3.3" ry="5.8" fill="#b0ecb6"/><ellipse cx="483.0" cy="327.6" rx="5.5" ry="10.5" fill="#45a79a"/><ellipse cx="482.2" cy="324.8" rx="4.7" ry="8.4" fill="#76d0a4"/><ellipse cx="481.3" cy="322.3" rx="3.0" ry="5.2" fill="#b0ecb6"/><ellipse cx="492.0" cy="325.8" rx="5.5" ry="12.5" fill="#45a79a"/><ellipse cx="491.2" cy="322.5" rx="4.7" ry="10.0" fill="#76d0a4"/><ellipse cx="490.3" cy="319.5" rx="3.0" ry="6.2" fill="#b0ecb6"/><ellipse cx="533.0" cy="330.8" rx="5.1" ry="8.0" fill="#45a79a"/><ellipse cx="532.2" cy="328.7" rx="4.3" ry="6.4" fill="#76d0a4"/><ellipse cx="531.5" cy="326.8" rx="2.8" ry="4.0" fill="#b0ecb6"/><ellipse cx="541.0" cy="332.1" rx="4.2" ry="6.5" fill="#45a79a"/><ellipse cx="540.4" cy="330.5" rx="3.6" ry="5.2" fill="#76d0a4"/><ellipse cx="539.7" cy="328.9" rx="2.3" ry="3.2" fill="#b0ecb6"/><ellipse cx="563.0" cy="331.2" rx="5.1" ry="7.5" fill="#45a79a"/><ellipse cx="562.2" cy="329.3" rx="4.3" ry="6.0" fill="#76d0a4"/><ellipse cx="561.5" cy="327.5" rx="2.8" ry="3.8" fill="#b0ecb6"/><ellipse cx="572.0" cy="332.1" rx="4.7" ry="6.5" fill="#45a79a"/><ellipse cx="571.3" cy="330.5" rx="4.0" ry="5.2" fill="#76d0a4"/><ellipse cx="570.6" cy="328.9" rx="2.6" ry="3.2" fill="#b0ecb6"/><ellipse cx="580.0" cy="333.1" rx="3.8" ry="5.5" fill="#45a79a"/><ellipse cx="579.4" cy="331.6" rx="3.3" ry="4.4" fill="#76d0a4"/><ellipse cx="578.9" cy="330.3" rx="2.1" ry="2.8" fill="#b0ecb6"/><ellipse cx="655.0" cy="336.6" rx="3.4" ry="6.0" fill="#45a79a"/><ellipse cx="654.5" cy="335.0" rx="2.9" ry="4.8" fill="#76d0a4"/><ellipse cx="654.0" cy="333.6" rx="1.9" ry="3.0" fill="#b0ecb6"/><ellipse cx="670.0" cy="334.1" rx="4.2" ry="6.5" fill="#45a79a"/><ellipse cx="669.4" cy="332.5" rx="3.6" ry="5.2" fill="#76d0a4"/><ellipse cx="668.7" cy="330.9" rx="2.3" ry="3.2" fill="#b0ecb6"/><ellipse cx="682.0" cy="333.2" rx="4.7" ry="7.5" fill="#45a79a"/><ellipse cx="681.3" cy="331.3" rx="4.0" ry="6.0" fill="#76d0a4"/><ellipse cx="680.6" cy="329.5" rx="2.6" ry="3.8" fill="#b0ecb6"/><ellipse cx="690.0" cy="334.6" rx="3.8" ry="6.0" fill="#45a79a"/><ellipse cx="689.4" cy="333.0" rx="3.3" ry="4.8" fill="#76d0a4"/><ellipse cx="688.9" cy="331.6" rx="2.1" ry="3.0" fill="#b0ecb6"/><ellipse cx="786.0" cy="325.9" rx="5.1" ry="9.0" fill="#45a79a"/><ellipse cx="785.2" cy="323.6" rx="4.3" ry="7.2" fill="#76d0a4"/><ellipse cx="784.5" cy="321.4" rx="2.8" ry="4.5" fill="#b0ecb6"/><ellipse cx="795.0" cy="329.7" rx="5.1" ry="7.0" fill="#45a79a"/><ellipse cx="794.2" cy="327.9" rx="4.3" ry="5.6" fill="#76d0a4"/><ellipse cx="793.5" cy="326.2" rx="2.8" ry="3.5" fill="#b0ecb6"/><ellipse cx="802.0" cy="332.1" rx="4.2" ry="5.5" fill="#45a79a"/><ellipse cx="801.4" cy="330.6" rx="3.6" ry="4.4" fill="#76d0a4"/><ellipse cx="800.7" cy="329.3" rx="2.3" ry="2.8" fill="#b0ecb6"/><ellipse cx="822.0" cy="332.1" rx="5.1" ry="6.5" fill="#45a79a"/><ellipse cx="821.2" cy="330.5" rx="4.3" ry="5.2" fill="#76d0a4"/><ellipse cx="820.5" cy="328.9" rx="2.8" ry="3.2" fill="#b0ecb6"/><ellipse cx="832.0" cy="331.2" rx="5.5" ry="7.5" fill="#45a79a"/><ellipse cx="831.2" cy="329.3" rx="4.7" ry="6.0" fill="#76d0a4"/><ellipse cx="830.3" cy="327.5" rx="3.0" ry="3.8" fill="#b0ecb6"/><ellipse cx="842.0" cy="332.6" rx="5.1" ry="6.0" fill="#45a79a"/><ellipse cx="841.2" cy="331.0" rx="4.3" ry="4.8" fill="#76d0a4"/><ellipse cx="840.5" cy="329.6" rx="2.8" ry="3.0" fill="#b0ecb6"/><ellipse cx="851.0" cy="331.7" rx="5.5" ry="7.0" fill="#45a79a"/><ellipse cx="850.2" cy="329.9" rx="4.7" ry="5.6" fill="#76d0a4"/><ellipse cx="849.3" cy="328.2" rx="3.0" ry="3.5" fill="#b0ecb6"/><ellipse cx="859.0" cy="333.1" rx="4.2" ry="5.5" fill="#45a79a"/><ellipse cx="858.4" cy="331.6" rx="3.6" ry="4.4" fill="#76d0a4"/><ellipse cx="857.7" cy="330.3" rx="2.3" ry="2.8" fill="#b0ecb6"/><ellipse cx="970.0" cy="331.7" rx="5.1" ry="7.0" fill="#45a79a"/><ellipse cx="969.2" cy="329.9" rx="4.3" ry="5.6" fill="#76d0a4"/><ellipse cx="968.5" cy="328.2" rx="2.8" ry="3.5" fill="#b0ecb6"/><ellipse cx="979.0" cy="333.1" rx="4.2" ry="5.5" fill="#45a79a"/><ellipse cx="978.4" cy="331.6" rx="3.6" ry="4.4" fill="#76d0a4"/><ellipse cx="977.7" cy="330.3" rx="2.3" ry="2.8" fill="#b0ecb6"/><ellipse cx="991.0" cy="332.9" rx="5.5" ry="9.0" fill="#45a79a"/><ellipse cx="990.2" cy="330.6" rx="4.7" ry="7.2" fill="#76d0a4"/><ellipse cx="989.3" cy="328.4" rx="3.0" ry="4.5" fill="#b0ecb6"/><ellipse cx="1000.0" cy="332.0" rx="6.0" ry="10.0" fill="#45a79a"/><ellipse cx="999.1" cy="329.4" rx="5.1" ry="8.0" fill="#76d0a4"/><ellipse cx="998.2" cy="327.0" rx="3.3" ry="5.0" fill="#b0ecb6"/><ellipse cx="1010.0" cy="333.8" rx="5.1" ry="8.0" fill="#45a79a"/><ellipse cx="1009.2" cy="331.7" rx="4.3" ry="6.4" fill="#76d0a4"/><ellipse cx="1008.5" cy="329.8" rx="2.8" ry="4.0" fill="#b0ecb6"/><ellipse cx="1019.0" cy="335.6" rx="4.2" ry="6.0" fill="#45a79a"/><ellipse cx="1018.4" cy="334.0" rx="3.6" ry="4.8" fill="#76d0a4"/><ellipse cx="1017.7" cy="332.6" rx="2.3" ry="3.0" fill="#b0ecb6"/><ellipse cx="1031.0" cy="329.0" rx="5.5" ry="10.0" fill="#45a79a"/><ellipse cx="1030.2" cy="326.4" rx="4.7" ry="8.0" fill="#76d0a4"/><ellipse cx="1029.3" cy="324.0" rx="3.0" ry="5.0" fill="#b0ecb6"/><path d="M255.0 338.0 L275.0 337.5 L300.0 338.5 L330.0 337.0 L350.0 333.5 L370.0 331.0 L395.0 330.5 L420.0 334.0 L440.0 339.0 L465.0 338.0 L500.0 336.0 L640.0 338.0 L700.0 338.0 L780.0 337.0 L800.0 338.0 L860.0 338.0 L900.0 337.0 L920.0 332.0 L940.0 331.0 L960.0 334.0 L985.0 339.0 L1010.0 340.0 L1036.0 338.5 L1036.0 436.5 L255.0 436.5 Z" fill="#b7e24a"/><ellipse cx="300.0" cy="343.0" rx="40.0" ry="3.5" fill="#dcea5c" opacity="0.75"/><ellipse cx="380.0" cy="336.0" rx="35.0" ry="3.0" fill="#dcea5c" opacity="0.75"/><ellipse cx="450.0" cy="352.0" rx="45.0" ry="4.0" fill="#dcea5c" opacity="0.75"/><ellipse cx="560.0" cy="346.0" rx="50.0" ry="3.5" fill="#dcea5c" opacity="0.75"/><ellipse cx="930.0" cy="336.0" rx="35.0" ry="3.0" fill="#dcea5c" opacity="0.75"/><ellipse cx="1000.0" cy="348.0" rx="35.0" ry="3.5" fill="#dcea5c" opacity="0.75"/><ellipse cx="840.0" cy="352.0" rx="40.0" ry="3.5" fill="#dcea5c" opacity="0.75"/><ellipse cx="700.0" cy="360.0" rx="50.0" ry="3.0" fill="#dcea5c" opacity="0.75"/><path d="M255.0 352.0 L300.0 350.0 L340.0 354.0 L380.0 352.0 L420.0 348.0 L470.0 344.0 L520.0 350.0 L600.0 352.0 L700.0 350.0 L800.0 352.0 L900.0 350.0 L960.0 346.0 L1000.0 350.0 L1036.0 353.0 L1036.0 436.5 L255.0 436.5 Z" fill="#9fdb4a" opacity="0.9"/><path d="M255.0 368.0 L290.0 371.0 L330.0 367.0 L370.0 372.0 L410.0 368.0 L450.0 364.0 L490.0 368.0 L540.0 371.0 L640.0 370.0 L760.0 368.0 L820.0 370.0 L880.0 366.0 L930.0 363.0 L980.0 367.0 L1036.0 369.0 L1036.0 436.5 L255.0 436.5 Z" fill="#6fcd51"/><path d="M255.0 376.0 L285.0 379.0 L320.0 375.0 L360.0 380.0 L405.0 377.0 L450.0 374.0 L500.0 378.0 L560.0 380.0 L640.0 379.0 L780.0 378.0 L840.0 380.0 L900.0 376.0 L950.0 374.0 L1000.0 378.0 L1036.0 379.0 L1036.0 436.5 L255.0 436.5 Z" fill="#49bd5b"/><path d="M255.0 388.0 L300.0 385.0 L340.0 389.0 L390.0 386.0 L440.0 389.0 L500.0 387.0 L640.0 389.0 L800.0 387.0 L860.0 390.0 L920.0 386.0 L980.0 389.0 L1036.0 387.0 L1036.0 436.5 L255.0 436.5 Z" fill="#2fa965"/><path d="M255.0 398.5 L310.0 400.5 L360.0 397.5 L420.0 400.5 L480.0 398.5 L640.0 399.5 L800.0 399.5 L880.0 397.5 L950.0 400.5 L1036.0 398.5 L1036.0 436.5 L255.0 436.5 Z" fill="#22996e"/><path d="M255.0 407.0 L290.0 405.5 L330.0 408.0 L380.0 406.0 L430.0 408.5 L500.0 406.5 L640.0 407.0 L800.0 407.0 L850.0 405.5 L900.0 408.0 L960.0 406.0 L1036.0 407.5 L1036.0 436.5 L255.0 436.5 Z" fill="#1f8478"/><path d="M255.0 414.5 L300.0 413.5 L350.0 415.5 L410.0 414.0 L470.0 416.0 L640.0 415.0 L800.0 415.0 L880.0 414.0 L940.0 416.0 L1036.0 414.5 L1036.0 436.5 L255.0 436.5 Z" fill="#216f7f"/><path d="M255.0 421.5 L320.0 420.5 L400.0 422.5 L480.0 421.0 L640.0 421.5 L800.0 421.5 L900.0 420.5 L1036.0 422.0 L1036.0 436.5 L255.0 436.5 Z" fill="#24617e"/><rect x="608" y="375" width="3" height="1.5" fill="#f0a0b0" opacity=".75"/><rect x="651" y="377" width="4" height="1.5" fill="#f5e070" opacity=".75"/><rect x="626" y="378" width="2" height="1.5" fill="#f5e070" opacity=".75"/><rect x="604" y="353" width="4" height="1.5" fill="#c0d0f0" opacity=".75"/><rect x="750" y="377" width="3" height="1.5" fill="#f0a0b0" opacity=".75"/><rect x="765" y="378" width="4" height="1.5" fill="#f5e070" opacity=".75"/><rect x="267" y="373" width="2" height="1.5" fill="#f0b0d8" opacity=".75"/><rect x="403" y="359" width="3" height="1.5" fill="#f0b0d8" opacity=".75"/><rect x="510" y="377" width="4" height="1.5" fill="#f5e070" opacity=".75"/><rect x="437" y="361" width="4" height="1.5" fill="#f0b0d8" opacity=".75"/><rect x="321" y="380" width="4" height="1.5" fill="#f0a0b0" opacity=".75"/><rect x="1032" y="390" width="3" height="1.5" fill="#a8c8f0" opacity=".75"/><rect x="847" y="373" width="2" height="1.5" fill="#f0b0d8" opacity=".75"/><rect x="695" y="352" width="3" height="1.5" fill="#f0b0d8" opacity=".75"/><rect x="557" y="396" width="2" height="1.5" fill="#f0b0d8" opacity=".75"/><rect x="419" y="393" width="3" height="1.5" fill="#f0a0b0" opacity=".75"/><rect x="1020" y="367" width="4" height="1.5" fill="#f0b0d8" opacity=".75"/><rect x="746" y="386" width="3" height="1.5" fill="#a8c8f0" opacity=".75"/><rect x="323" y="363" width="2" height="1.5" fill="#f0a0b0" opacity=".75"/><rect x="360" y="383" width="2" height="1.5" fill="#f0b0d8" opacity=".75"/><rect x="618" y="371" width="2" height="1.5" fill="#c0d0f0" opacity=".75"/><rect x="604" y="356" width="3" height="1.5" fill="#f5e070" opacity=".75"/><rect x="757" y="352" width="2" height="1.5" fill="#f0a0b0" opacity=".75"/><rect x="255" y="391" width="3" height="1.5" fill="#c0d0f0" opacity=".75"/><rect x="1034" y="347" width="3" height="1.5" fill="#f5e070" opacity=".75"/><rect x="1032" y="377" width="2" height="1.5" fill="#c0d0f0" opacity=".75"/><rect x="288" y="354" width="3" height="1.5" fill="#f0a0b0" opacity=".75"/><rect x="262" y="378" width="3" height="1.5" fill="#a8c8f0" opacity=".75"/><rect x="312" y="351" width="4" height="1.5" fill="#c0d0f0" opacity=".75"/><rect x="445" y="377" width="4" height="1.5" fill="#a8c8f0" opacity=".75"/><rect x="609" y="396" width="4" height="1.5" fill="#f0a0b0" opacity=".75"/><rect x="361" y="366" width="3" height="1.5" fill="#f5e070" opacity=".75"/><rect x="964" y="389" width="4" height="1.5" fill="#f5e070" opacity=".75"/><rect x="403" y="384" width="2" height="1.5" fill="#c0d0f0" opacity=".75"/><rect x="791" y="366" width="4" height="1.5" fill="#f0a0b0" opacity=".75"/><rect x="316" y="348" width="2" height="1.5" fill="#f0b0d8" opacity=".75"/><rect x="655" y="359" width="3" height="1.5" fill="#f0a0b0" opacity=".75"/><rect x="583" y="393" width="3" height="1.5" fill="#f0a0b0" opacity=".75"/><rect x="661" y="394" width="2" height="1.5" fill="#f0b0d8" opacity=".75"/><rect x="433" y="375" width="4" height="1.5" fill="#c0d0f0" opacity=".75"/><rect x="313" y="357" width="4" height="1.5" fill="#f5e070" opacity=".75"/><rect x="268" y="360" width="2" height="1.5" fill="#f0a0b0" opacity=".75"/><rect x="302" y="355" width="4" height="1.5" fill="#a8c8f0" opacity=".75"/><rect x="702" y="353" width="2" height="1.5" fill="#a8c8f0" opacity=".75"/><rect x="950" y="397" width="4" height="1.5" fill="#c0d0f0" opacity=".75"/><rect x="994" y="377" width="3" height="1.5" fill="#f0b0d8" opacity=".75"/><rect x="965" y="382" width="2" height="1.5" fill="#f0b0d8" opacity=".75"/><rect x="722" y="350" width="4" height="1.5" fill="#f0b0d8" opacity=".75"/><rect x="498" y="353" width="2" height="1.5" fill="#f0b0d8" opacity=".75"/><rect x="609" y="365" width="4" height="1.5" fill="#f0b0d8" opacity=".75"/><rect x="830" y="353" width="3" height="1.5" fill="#a8c8f0" opacity=".75"/><rect x="321" y="371" width="3" height="1.5" fill="#f0b0d8" opacity=".75"/><rect x="992" y="348" width="4" height="1.5" fill="#f0a0b0" opacity=".75"/><rect x="266" y="380" width="4" height="1.5" fill="#f0a0b0" opacity=".75"/><rect x="265" y="350" width="4" height="1.5" fill="#f0b0d8" opacity=".75"/><rect x="345" y="359" width="4" height="1.5" fill="#f0a0b0" opacity=".75"/><rect x="513" y="395" width="3" height="1.5" fill="#c0d0f0" opacity=".75"/><rect x="599" y="390" width="4" height="1.5" fill="#f0b0d8" opacity=".75"/><rect x="841" y="348" width="2" height="1.5" fill="#c0d0f0" opacity=".75"/><rect x="630" y="358" width="3" height="1.5" fill="#f0b0d8" opacity=".75"/><rect x="864" y="380" width="3" height="1.5" fill="#f0a0b0" opacity=".75"/><rect x="955" y="365" width="4" height="1.5" fill="#f5e070" opacity=".75"/><rect x="732" y="373" width="4" height="1.5" fill="#a8c8f0" opacity=".75"/><rect x="981" y="372" width="3" height="1.5" fill="#f5e070" opacity=".75"/><rect x="571" y="359" width="2" height="1.5" fill="#f0a0b0" opacity=".75"/><rect x="942" y="366" width="3" height="1.5" fill="#c0d0f0" opacity=".75"/><rect x="419" y="353" width="2" height="1.5" fill="#a8c8f0" opacity=".75"/><rect x="810" y="395" width="2" height="1.5" fill="#a8c8f0" opacity=".75"/><rect x="343" y="371" width="3" height="1.5" fill="#f5e070" opacity=".75"/><rect x="554" y="373" width="4" height="1.5" fill="#a8c8f0" opacity=".75"/><rect x="910" y="397" width="3" height="1.5" fill="#f0a0b0" opacity=".75"/><rect x="313" y="348" width="2" height="1.5" fill="#c0d0f0" opacity=".75"/><rect x="784" y="361" width="3" height="1.5" fill="#a8c8f0" opacity=".75"/><rect x="762" y="375" width="3" height="1.5" fill="#f5e070" opacity=".75"/><rect x="610" y="347" width="2" height="1.5" fill="#a8c8f0" opacity=".75"/><rect x="863" y="387" width="3" height="1.5" fill="#f0b0d8" opacity=".75"/><rect x="340" y="374" width="2" height="1.5" fill="#a8c8f0" opacity=".75"/><rect x="789" y="356" width="3" height="1.5" fill="#f0a0b0" opacity=".75"/><rect x="394" y="347" width="4" height="1.5" fill="#f0a0b0" opacity=".75"/><rect x="812" y="355" width="3" height="1.5" fill="#a8c8f0" opacity=".75"/><rect x="676" y="395" width="4" height="1.5" fill="#c0d0f0" opacity=".75"/><rect x="1033" y="354" width="2" height="1.5" fill="#f5e070" opacity=".75"/><rect x="575" y="392" width="2" height="1.5" fill="#f0a0b0" opacity=".75"/><rect x="607" y="356" width="3" height="1.5" fill="#f0b0d8" opacity=".75"/><rect x="684" y="380" width="3" height="1.5" fill="#c0d0f0" opacity=".75"/><rect x="617" y="380" width="2" height="1.5" fill="#f5e070" opacity=".75"/><rect x="818" y="389" width="2" height="1.5" fill="#f0b0d8" opacity=".75"/><rect x="444" y="366" width="3" height="1.5" fill="#f0b0d8" opacity=".75"/><rect x="674" y="387" width="3" height="1.5" fill="#a8c8f0" opacity=".75"/><rect x="965" y="391" width="4" height="1.5" fill="#a8c8f0" opacity=".75"/><rect x="320" y="369" width="3" height="1.5" fill="#c0d0f0" opacity=".75"/><rect x="855" y="371" width="2" height="1.5" fill="#f0b0d8" opacity=".75"/><rect x="887" y="349" width="2" height="1.5" fill="#f0b0d8" opacity=".75"/><rect x="671" y="382" width="3" height="1.5" fill="#f5e070" opacity=".75"/><rect x="371" y="373" width="4" height="1.5" fill="#c0d0f0" opacity=".75"/><rect x="793" y="395" width="4" height="1.5" fill="#f0a0b0" opacity=".75"/><rect x="996" y="350" width="3" height="1.5" fill="#f5e070" opacity=".75"/><rect x="666" y="361" width="4" height="1.5" fill="#c0d0f0" opacity=".75"/><rect x="383" y="373" width="3" height="1.5" fill="#c0d0f0" opacity=".75"/><rect x="498" y="366" width="2" height="1.5" fill="#c0d0f0" opacity=".75"/><rect x="493" y="353" width="4" height="1.5" fill="#c0d0f0" opacity=".75"/><rect x="468" y="372" width="4" height="1.5" fill="#f0a0b0" opacity=".75"/><rect x="344" y="346" width="2" height="1.5" fill="#f0a0b0" opacity=".75"/><rect x="675" y="348" width="4" height="1.5" fill="#f0a0b0" opacity=".75"/><rect x="880" y="375" width="2" height="1.5" fill="#f0a0b0" opacity=".75"/><rect x="794" y="349" width="3" height="1.5" fill="#c0d0f0" opacity=".75"/><rect x="578" y="396" width="3" height="1.5" fill="#f0a0b0" opacity=".75"/><rect x="447" y="372" width="3" height="1.5" fill="#a8c8f0" opacity=".75"/><rect x="958" y="395" width="4" height="1.5" fill="#f0a0b0" opacity=".75"/><rect x="503" y="356" width="2" height="1.5" fill="#c0d0f0" opacity=".75"/><clipPath id="pc1"><path d="M525.6 123.8 L715.0 123.8 L715.0 143.4 L724.4 143.4 L724.4 171.6 L733.8 171.6 L733.8 188.8 L679.0 188.8 L679.0 179.4 L669.7 179.4 L669.7 170.0 L658.8 170.0 L658.8 160.6 L599.7 160.6 L599.7 171.6 L590.3 171.6 L590.3 179.4 L550.6 179.4 L550.6 210.6 L599.7 210.6 L599.7 220.0 L679.0 220.0 L679.0 210.6 L771.3 210.6 L771.3 220.0 L781.3 220.0 L781.3 237.2 L525.6 237.2 Z"/></clipPath><g clip-path="url(#pc1)"><path d="M525.6 123.8 L715.0 123.8 L715.0 143.4 L724.4 143.4 L724.4 171.6 L733.8 171.6 L733.8 188.8 L679.0 188.8 L679.0 179.4 L669.7 179.4 L669.7 170.0 L658.8 170.0 L658.8 160.6 L599.7 160.6 L599.7 171.6 L590.3 171.6 L590.3 179.4 L550.6 179.4 L550.6 210.6 L599.7 210.6 L599.7 220.0 L679.0 220.0 L679.0 210.6 L771.3 210.6 L771.3 220.0 L781.3 220.0 L781.3 237.2 L525.6 237.2 Z" fill="#151d19" stroke="#42594a" stroke-width="6"/><path d="M525.6 123.8 L715.0 123.8 L715.0 143.4 L724.4 143.4 L724.4 171.6 L733.8 171.6 L733.8 188.8 L679.0 188.8 L679.0 179.4 L669.7 179.4 L669.7 170.0 L658.8 170.0 L658.8 160.6 L599.7 160.6 L599.7 171.6 L590.3 171.6 L590.3 179.4 L550.6 179.4 L550.6 210.6 L599.7 210.6 L599.7 220.0 L679.0 220.0 L679.0 210.6 L771.3 210.6 L771.3 220.0 L781.3 220.0 L781.3 237.2 L525.6 237.2 Z" fill="none" stroke="#8fae8a" stroke-width="2.2" stroke-dasharray="2.6 1.6" opacity="0.8"/></g><rect x="771.9" y="123.8" width="27.600" height="5.600" fill="#1d4a4a" stroke="#3f8f7a" stroke-width="1"/><circle cx="785.6999999999999" cy="127.500" r="2.600" fill="#dfe8e8" opacity=".9"/><rect x="878" y="123.8" width="27.600" height="5.600" fill="#1d4a4a" stroke="#3f8f7a" stroke-width="1"/><circle cx="891.8" cy="127.500" r="2.600" fill="#dfe8e8" opacity=".9"/><clipPath id="pc2"><path d="M801.9 228.8 L838.4 228.8 L838.4 237.2 L866.6 237.2 L866.6 246.6 L876.0 246.6 L876.0 256.0 L830.6 256.0 L830.6 246.6 L811.9 246.6 L811.9 237.2 L801.9 237.2 Z"/></clipPath><g clip-path="url(#pc2)"><path d="M801.9 228.8 L838.4 228.8 L838.4 237.2 L866.6 237.2 L866.6 246.6 L876.0 246.6 L876.0 256.0 L830.6 256.0 L830.6 246.6 L811.9 246.6 L811.9 237.2 L801.9 237.2 Z" fill="#2a2216" stroke="#a07a40" stroke-width="4.4"/><path d="M801.9 228.8 L838.4 228.8 L838.4 237.2 L866.6 237.2 L866.6 246.6 L876.0 246.6 L876.0 256.0 L830.6 256.0 L830.6 246.6 L811.9 246.6 L811.9 237.2 L801.9 237.2 Z" fill="none" stroke="#e0b870" stroke-width="2.2" stroke-dasharray="2 1.4" opacity="0.8"/></g><rect x="881.500" y="244.800" width="11" height="11" rx="1" fill="#2f3fb8"/><rect x="884.500" y="247.800" width="5" height="5" fill="#8f9fe8"/><clipPath id="pc3"><path d="M497.5 315.0 L524.0 315.0 L524.0 344.7 L693.0 344.7 L743.0 315.0 L782.0 315.0 L782.0 417.5 L497.5 417.5 Z"/></clipPath><g clip-path="url(#pc3)"><path d="M497.5 315.0 L524.0 315.0 L524.0 344.7 L693.0 344.7 L743.0 315.0 L782.0 315.0 L782.0 417.5 L497.5 417.5 Z" fill="#211e17" stroke="#a88248" stroke-width="5.2"/><path d="M497.5 315.0 L524.0 315.0 L524.0 344.7 L693.0 344.7 L743.0 315.0 L782.0 315.0 L782.0 417.5 L497.5 417.5 Z" fill="none" stroke="#e4bc74" stroke-width="2.2" stroke-dasharray="2 1.4" opacity="0.8"/></g><path d="M525 345.200H696" fill="none" stroke="#3f8a30" stroke-width="3.600"/><path d="M525 342.600H696" fill="none" stroke="#a2d944" stroke-width="2.400"/><path d="M695 344.800L739 315.200" fill="none" stroke="#6f917a" stroke-width="4.200"/><path d="M702 338L739 313.600H783" fill="none" stroke="#3f7f33" stroke-width="3.200"/><path d="M742 312.600H783" fill="none" stroke="#6fae3c" stroke-width="1.200"/><ellipse cx="812.0" cy="336.0" rx="6.0" ry="6.6" fill="#8fdc78"/><ellipse cx="822.0" cy="333.0" rx="7.0" ry="7.7" fill="#c4ea62"/><ellipse cx="833.0" cy="331.0" rx="7.5" ry="8.2" fill="#9be07c"/><ellipse cx="844.0" cy="333.0" rx="7.0" ry="7.7" fill="#d4ee64"/><ellipse cx="854.0" cy="332.0" rx="6.5" ry="7.2" fill="#a4e27a"/><ellipse cx="863.0" cy="335.0" rx="5.0" ry="5.5" fill="#c4ea62"/><rect x="803" y="337.500" width="56" height="4.500" fill="#e4ec5c"/><clipPath id="pc4"><path d="M841.6 283.8 L898.8 283.8 L898.8 289.0 L895.6 289.0 L895.6 360.3 L802.5 360.3 L802.5 349.4 L792.0 349.4 L792.0 341.5 L858.8 341.5 L858.8 333.8 L869.7 333.8 L869.7 313.4 L827.5 313.4 L827.5 321.9 L801.9 321.9 L801.9 302.5 L811.3 302.5 L811.3 293.0 L841.6 293.0 Z"/></clipPath><g clip-path="url(#pc4)"><path d="M841.6 283.8 L898.8 283.8 L898.8 289.0 L895.6 289.0 L895.6 360.3 L802.5 360.3 L802.5 349.4 L792.0 349.4 L792.0 341.5 L858.8 341.5 L858.8 333.8 L869.7 333.8 L869.7 313.4 L827.5 313.4 L827.5 321.9 L801.9 321.9 L801.9 302.5 L811.3 302.5 L811.3 293.0 L841.6 293.0 Z" fill="#1c1a1c" stroke="#45414a" stroke-width="4.4"/><path d="M841.6 283.8 L898.8 283.8 L898.8 289.0 L895.6 289.0 L895.6 360.3 L802.5 360.3 L802.5 349.4 L792.0 349.4 L792.0 341.5 L858.8 341.5 L858.8 333.8 L869.7 333.8 L869.7 313.4 L827.5 313.4 L827.5 321.9 L801.9 321.9 L801.9 302.5 L811.3 302.5 L811.3 293.0 L841.6 293.0 Z" fill="none" stroke="#7a7580" stroke-width="2.2" stroke-dasharray="2 1.6" opacity="0.7"/></g><path d="M841 284.800H899.500M810.500 294H841.600M801 303.500H811.300M791.500 342.500H813" fill="none" stroke="#3b7d31" stroke-width="4.200"/><path d="M841 283.300H899.500M810.500 292.500H841.600M801 302H811.300M791.500 341H813" fill="none" stroke="#63a843" stroke-width="1.300" stroke-dasharray="2.500 1.200"/><rect x="559" y="189.500" width="8.500" height="19" rx="2" fill="#e8e0c8"/><rect x="557" y="195" width="12.500" height="4" fill="#d8d0b0"/><rect x="543.500" y="328" width="7.500" height="13.500" rx="1" fill="#3450c8"/><rect x="545" y="338" width="4.500" height="5.500" fill="#b8c0d8"/><rect x="595.500" y="332" width="11.500" height="8.500" rx="1" fill="#8a5a28"/><rect x="595.500" y="334.500" width="11.500" height="1.500" fill="#d8a850"/><rect x="668" y="285" width="37.600" height="11" fill="#6c7c9c"/><rect x="670" y="287" width="33.600" height="6.500" fill="#15171c"/><path d="M672 291l3-3 3 3 3-3 3 3M688 291l3-3 3 3 3-3 3 3" stroke="#aab4c8" stroke-width="1" fill="none"/><rect x="668" y="296" width="10" height="8.600" fill="#6c7c9c"/><rect x="695.600" y="296" width="10" height="8.600" fill="#6c7c9c"/><rect x="669.500" y="297.500" width="7" height="6" fill="#15171c"/><rect x="697.100" y="297.500" width="7" height="6" fill="#15171c"/><rect x="649.600" y="314" width="2.400" height="28" fill="#2fa89a"/><rect x="647" y="318" width="7.500" height="2" fill="#2fa89a"/><g transform="translate(638.8,151.5) scale(.78)"><path d="M8 1a4 4 0 0 0-4 4v2H3v7h10V7h-1V5a4 4 0 0 0-4-4zm0 2a2 2 0 0 1 2 2v2H6V5a2 2 0 0 1 2-2z" fill="#fff" fill-rule="evenodd"/></g><g transform="translate(638.8,294.0) scale(.78)"><path d="M8 1a4 4 0 0 0-4 4v2H3v7h10V7h-1V5a4 4 0 0 0-4-4zm0 2a2 2 0 0 1 2 2v2H6V5a2 2 0 0 1 2-2z" fill="#fff" fill-rule="evenodd"/></g><circle cx="620" cy="119.5" r="2.300" fill="#d8f0e0" stroke="#4f9a8a" stroke-width="1"/><circle cx="708" cy="113.5" r="2.300" fill="#d8f0e0" stroke="#4f9a8a" stroke-width="1"/><circle cx="660" cy="196.5" r="2.300" fill="#d8f0e0" stroke="#4f9a8a" stroke-width="1"/><circle cx="831.5" cy="219" r="2.300" fill="#d8f0e0" stroke="#4f9a8a" stroke-width="1"/><circle cx="884.5" cy="277" r="2.300" fill="#d8f0e0" stroke="#4f9a8a" stroke-width="1"/><circle cx="863" cy="324.5" r="2.300" fill="#d8f0e0" stroke="#4f9a8a" stroke-width="1"/><rect x="432.500" y="246.900" width="228.800" height="128.400" fill="none" stroke="#d058c0" stroke-width=".9" opacity=".5"/><path d="M255 294.700H639.700" stroke="#e2466c" stroke-width="1.100" opacity=".8"/><path d="M639.700 294.700H1035.5" stroke="#a060b8" stroke-width="1" opacity=".6"/><path d="M639.700 80V294.700" stroke="#a4cc50" stroke-width="1" opacity=".8"/><path d="M639.700 294.700V436.5" stroke="#8fb8a8" stroke-width="1" opacity=".6"/><path d="M639.700 291.500l3 3.200-3 3.200-3-3.200z" fill="#f08a50"/><rect x="388.700" y="431.600" width="293.500" height="3" rx="1.500" fill="#a9c6de" opacity=".75"/></g><rect x="245.300" y="71" width="790.700" height="9" fill="#1d2229"/><rect x="245.300" y="71" width="9.700" height="365.500" fill="#1d2229"/><rect x="245.300" y="71" width="9.700" height="9" fill="#6b6f77"/><path d="M262.7 77.5V80 M282.6 77.5V80 M302.4 77.5V80 M322.3 77.5V80 M342.1 75V80 M361.9 77.5V80 M381.8 77.5V80 M401.6 77.5V80 M421.5 77.5V80 M441.3 71V80 M461.1 77.5V80 M481.0 77.5V80 M500.8 77.5V80 M520.7 77.5V80 M540.5 75V80 M560.3 77.5V80 M580.2 77.5V80 M600.0 77.5V80 M619.9 77.5V80 M639.7 71V80 M659.5 77.5V80 M679.4 77.5V80 M699.2 77.5V80 M719.1 77.5V80 M738.9 75V80 M758.7 77.5V80 M778.6 77.5V80 M798.4 77.5V80 M818.3 77.5V80 M838.1 71V80 M857.9 77.5V80 M877.8 77.5V80 M897.6 77.5V80 M917.5 77.5V80 M937.3 75V80 M957.1 77.5V80 M977.0 77.5V80 M996.8 77.5V80 M1016.7 77.5V80 M246 96.3H255 M252.5 116.1H255 M252.5 136.0H255 M252.5 155.8H255 M252.5 175.7H255 M250 195.5H255 M252.5 215.3H255 M252.5 235.2H255 M252.5 255.0H255 M252.5 274.9H255 M246 294.7H255 M252.5 314.5H255 M252.5 334.4H255 M252.5 354.2H255 M252.5 374.1H255 M250 393.9H255 M252.5 413.7H255 M252.5 433.6H255" stroke="#8a8e96" stroke-width=".8" fill="none"/><text x="442.8" y="78" font-family="Liberation Sans,sans-serif" font-size="5.600" fill="#b8bbc0">-500</text><text x="641.2" y="78" font-family="Liberation Sans,sans-serif" font-size="5.600" fill="#b8bbc0">0</text><text x="839.6" y="78" font-family="Liberation Sans,sans-serif" font-size="5.600" fill="#b8bbc0">500</text><text transform="translate(253.200,96) rotate(-90)" font-family="Liberation Sans,sans-serif" font-size="5.600" fill="#b8bbc0">-500</text><text transform="translate(253.200,293.500) rotate(-90)" font-family="Liberation Sans,sans-serif" font-size="5.600" fill="#b8bbc0">0</text><rect x="245" y="70.500" width="791" height="366.800" fill="none" stroke="#44729e" stroke-width="1.200"/><g fill="#fff"><circle cx="289.500" cy="93.400" r="5"/><circle cx="345.300" cy="93.400" r="5"/></g><path d="M286.700 93.400h5.600M342.500 93.400h5.600M345.300 90.600v5.600" stroke="#3a3f6a" stroke-width="1.600"/><path d="M268.100 88.200v3.400M268.100 95.200v3.400M262.900 93.400h3.400M269.900 93.400h3.400" stroke="#fff" stroke-width="1.400"/><path d="M264.500 89.800l2 2M271.700 89.800l-2 2M264.500 97l2-2M271.700 97l-2-2" stroke="#fff" stroke-width="1.100"/><text x="302.800" y="97" font-family="Liberation Sans,sans-serif" font-size="9.300" fill="#ffffff" stroke="#3b3b86" stroke-width="1.3" paint-order="stroke" stroke-linejoin="round">59.5 %</text></svg>
<div class="a" style="left:248.0px;top:444.0px;width:742.8px;height:174.7px;background:#252b34;border-radius:2px;"></div>
<div class="a t" style="left:250.7px;top:445.3px;height:16px;line-height:16px;font-size:8.65px;color:#e0e0e0;font-weight:bold;font-family:'Liberation Mono',monospace;">Action Game Maker 1.0.8 based on Godot v4.3</div>
<div class="a t" style="left:250.7px;top:455.9px;height:16px;line-height:16px;font-size:8.65px;color:#7d8188;font-family:'Liberation Mono',monospace;">--- Debug adapter server started on port 6006 ---</div>
<div class="a t" style="left:250.7px;top:466.6px;height:16px;line-height:16px;font-size:8.65px;color:#7d8188;font-family:'Liberation Mono',monospace;">--- GDScript language server started on port 6005 ---</div>
<div class="a" style="left:248.0px;top:621.3px;width:742.8px;height:18.8px;background:#252b34;border-radius:2px;"></div>
<div class="a t" style="left:252.4px;top:623.5px;height:16px;line-height:16px;font-size:10px;color:#b5b8bc;">Filtrera meddelanden</div>
<div class="a t" style="left:252px;top:646.1px;height:16px;line-height:16px;font-size:10px;color:#70bafa;">Output</div>
<div class="a t" style="left:294px;top:646.1px;height:16px;line-height:16px;font-size:10px;color:#cdcfd2;">Avlusare</div>
<div class="a t" style="left:342.8px;top:646.1px;height:16px;line-height:16px;font-size:10px;color:#cdcfd2;">Ljud</div>
<div class="a t" style="left:372.6px;top:646.1px;height:16px;line-height:16px;font-size:10px;color:#cdcfd2;">Animation</div>
<div class="a t" style="left:428.7px;top:646.1px;height:16px;line-height:16px;font-size:10px;color:#cdcfd2;">Shader Editor</div>
<div class="a t" style="left:958.5px;top:646.1px;height:16px;line-height:16px;font-size:10px;color:#8d9197;">1.0.8.stable</div>
<div class="a" style="left:1015.0px;top:469.0px;width:18.3px;height:18.5px;background:#252b34;border-radius:2px;"></div>
<div class="a" style="left:993.4px;top:494.9px;width:40.0px;height:20.1px;background:#252b34;border-radius:2px;border-bottom:2px solid #4f8fd0;"></div>
<div class="a t" style="left:1012px;top:497.3px;height:16px;line-height:16px;font-size:10px;color:#6fa8e0;width:14px;text-align:center;">1</div>
<div class="a" style="left:993.4px;top:517.4px;width:40.0px;height:20.1px;background:#252b34;border-radius:2px;border-bottom:2px solid #4f8fd0;"></div>
<div class="a t" style="left:1012px;top:519.8px;height:16px;line-height:16px;font-size:10px;color:#6fa8e0;width:14px;text-align:center;">0</div>
<div class="a" style="left:993.4px;top:539.8px;width:40.0px;height:20.1px;background:#252b34;border-radius:2px;border-bottom:2px solid #4f8fd0;"></div>
<div class="a t" style="left:1012px;top:542.2px;height:16px;line-height:16px;font-size:10px;color:#6fa8e0;width:14px;text-align:center;">0</div>
<div class="a" style="left:993.4px;top:562.2px;width:40.0px;height:20.1px;background:#252b34;border-radius:2px;border-bottom:2px solid #4f8fd0;"></div>
<div class="a t" style="left:1012px;top:564.6px;height:16px;line-height:16px;font-size:10px;color:#6fa8e0;width:14px;text-align:center;">2</div>
<div class="a" style="left:1042.0px;top:69.0px;width:208.5px;height:19.4px;background:#252b34;border-radius:2px;"></div>
<div class="a t" style="left:1060px;top:71.6px;height:16px;line-height:16px;font-size:10px;color:#cdcfd2;letter-spacing:-0.35px;">GameScene</div>
<div class="a" style="left:1042.0px;top:92.4px;width:208.5px;height:18.4px;background:#252b34;border-radius:2px;"></div>
<div class="a t" style="left:1045.4px;top:94.0px;height:16px;line-height:16px;font-size:10px;color:#b5b8bc;">Filter Properties</div>
<div class="a" style="left:1043.5px;top:114.0px;width:228.5px;height:549.0px;background:#252b34;border-radius:2px;"></div>
<div class="a" style="left:1044.3px;top:115.8px;width:225.2px;height:16.2px;background:#3a414d;"></div>
<svg class="ic" style="left:1121.7px;top:118.6px" width="10.7" height="10.7" viewBox="0 0 16 16"><path d="M2 5h12v9H2z" fill="none" stroke="#e58e26" stroke-width="2"/><path d="M2 1.500h2.500v3H2zM6.500 1.500H9v3H6.500zM11 1.500h3v3h-3z" fill="#e58e26"/><path d="M3.500 8.500h6v4h-6z" fill="#4a8fd8"/><path d="M8 7h4.500v4H8z" fill="#e58e26" opacity=".85"/></svg>
<div class="a t" style="left:1136.8px;top:116.9px;height:16px;line-height:16px;font-size:10px;color:#e0e0e0;font-weight:bold;">GameScene</div>
<div class="a t" style="left:1049.3px;top:134.4px;height:16px;line-height:16px;font-size:10px;color:#a9acb1;">Camera List</div>
<div class="a" style="left:1157.0px;top:133.7px;width:112.5px;height:17.3px;background:#2e343f;border-radius:2px;"></div>
<div class="a t" style="left:1157px;top:135.1px;height:16px;line-height:16px;font-size:10px;color:#cdcfd2;width:112.5px;text-align:center;">Array (storlek 1)</div>
<div class="a t" style="left:1049.3px;top:156.1px;height:16px;line-height:16px;font-size:10px;color:#a9acb1;">Gravity</div>
<div class="a" style="left:1157.0px;top:155.2px;width:112.5px;height:17.3px;background:#20252c;border-radius:2px;"></div>
<div class="a t" style="left:1167.7px;top:156.4px;height:16px;line-height:16px;font-size:10px;color:#cdcfd2;">980</div>
<div class="a t" style="left:1187.8px;top:156.4px;height:16px;line-height:16px;font-size:10px;color:#5f646c;">px/s^2</div>
<div class="a t" style="left:1049.3px;top:177.8px;height:16px;line-height:16px;font-size:10px;color:#a9acb1;">Gravity Direction</div>
<div class="a" style="left:1157.0px;top:177.0px;width:112.5px;height:17.7px;background:#20252c;border-radius:2px;"></div>
<div class="a" style="left:1157.0px;top:177.0px;width:12.7px;height:17.7px;background:#191d23;border-radius:2px 0 0 2px;"></div>
<div class="a t" style="left:1160.3px;top:178.5px;height:16px;line-height:16px;font-size:10px;color:#7d8188;">x</div>
<div class="a t" style="left:1175.4px;top:178.5px;height:16px;line-height:16px;font-size:10px;color:#cdcfd2;">0</div>
<div class="a" style="left:1157.0px;top:198.7px;width:112.5px;height:17.7px;background:#20252c;border-radius:2px;"></div>
<div class="a" style="left:1157.0px;top:198.7px;width:12.7px;height:17.7px;background:#191d23;border-radius:2px 0 0 2px;"></div>
<div class="a t" style="left:1160.3px;top:200.2px;height:16px;line-height:16px;font-size:10px;color:#7d8188;">y</div>
<div class="a t" style="left:1175.4px;top:200.2px;height:16px;line-height:16px;font-size:10px;color:#cdcfd2;">1</div>
<div class="a" style="left:1044.3px;top:218.5px;width:225.2px;height:14.8px;background:#3a414d;"></div>
<svg class="ic" style="left:1130.5px;top:220.6px" width="10.7" height="10.7" viewBox="0 0 16 16"><circle cx="8" cy="8" r="5" fill="none" stroke="#8da5f3" stroke-width="2"/></svg>
<div class="a t" style="left:1145.5px;top:218.9px;height:16px;line-height:16px;font-size:10px;color:#e0e0e0;font-weight:bold;">Node2D</div>
<div class="a" style="left:1044.3px;top:250.6px;width:225.2px;height:14.9px;background:#3a414d;"></div>
<svg class="ic" style="left:1121.7px;top:252.7px" width="10.7" height="10.7" viewBox="0 0 16 16"><path d="M2.500 14l1-3.500 8-8 2.500 2.500-8 8z" fill="#c8c8c8"/><path d="M2.500 14l1-3.500 2.500 2.500z" fill="#8a8a8a"/></svg>
<div class="a t" style="left:1136.3px;top:251.1px;height:16px;line-height:16px;font-size:10px;color:#e0e0e0;font-weight:bold;">CanvasItem</div>
<div class="a" style="left:1044.3px;top:330.2px;width:225.2px;height:15.4px;background:#3a414d;"></div>
<svg class="ic" style="left:1139.2px;top:332.5px" width="10.7" height="10.7" viewBox="0 0 16 16"><circle cx="8" cy="8" r="5" fill="none" stroke="#e0e0e0" stroke-width="2"/></svg>
<div class="a t" style="left:1154.2px;top:330.9px;height:16px;line-height:16px;font-size:10px;color:#e0e0e0;font-weight:bold;">Nod</div>
<svg class="ic" style="left:1045.5px;top:237.4px" width="7.5" height="7.5" viewBox="0 0 16 16" opacity="0.8"><path d="M6 4l4 4-4 4" fill="none" stroke="#e0e0e0" stroke-width="2" stroke-linecap="round" stroke-linejoin="round"/></svg>
<div class="a t" style="left:1054.7px;top:234.2px;height:16px;line-height:16px;font-size:10px;color:#e0e0e0;font-weight:bold;">Förvandla</div>
<svg class="ic" style="left:1045.5px;top:269.6px" width="7.5" height="7.5" viewBox="0 0 16 16" opacity="0.8"><path d="M6 4l4 4-4 4" fill="none" stroke="#e0e0e0" stroke-width="2" stroke-linecap="round" stroke-linejoin="round"/></svg>
<div class="a t" style="left:1054.7px;top:266.4px;height:16px;line-height:16px;font-size:10px;color:#e0e0e0;font-weight:bold;">Visibility</div>
<svg class="ic" style="left:1045.5px;top:285.6px" width="7.5" height="7.5" viewBox="0 0 16 16" opacity="0.8"><path d="M6 4l4 4-4 4" fill="none" stroke="#e0e0e0" stroke-width="2" stroke-linecap="round" stroke-linejoin="round"/></svg>
<div class="a t" style="left:1054.7px;top:282.4px;height:16px;line-height:16px;font-size:10px;color:#e0e0e0;font-weight:bold;">Ordering</div>
<svg class="ic" style="left:1045.5px;top:301.6px" width="7.5" height="7.5" viewBox="0 0 16 16" opacity="0.8"><path d="M6 4l4 4-4 4" fill="none" stroke="#e0e0e0" stroke-width="2" stroke-linecap="round" stroke-linejoin="round"/></svg>
<div class="a t" style="left:1054.7px;top:298.4px;height:16px;line-height:16px;font-size:10px;color:#e0e0e0;font-weight:bold;">Texture</div>
<svg class="ic" style="left:1045.5px;top:317.6px" width="7.5" height="7.5" viewBox="0 0 16 16" opacity="0.8"><path d="M6 4l4 4-4 4" fill="none" stroke="#e0e0e0" stroke-width="2" stroke-linecap="round" stroke-linejoin="round"/></svg>
<div class="a t" style="left:1054.7px;top:314.3px;height:16px;line-height:16px;font-size:10px;color:#e0e0e0;font-weight:bold;">Material</div>
<svg class="ic" style="left:1045.5px;top:349.4px" width="7.5" height="7.5" viewBox="0 0 16 16" opacity="0.8"><path d="M6 4l4 4-4 4" fill="none" stroke="#e0e0e0" stroke-width="2" stroke-linecap="round" stroke-linejoin="round"/></svg>
<div class="a t" style="left:1054.7px;top:346.2px;height:16px;line-height:16px;font-size:10px;color:#e0e0e0;font-weight:bold;">Process</div>
<svg class="ic" style="left:1045.5px;top:365.4px" width="7.5" height="7.5" viewBox="0 0 16 16" opacity="0.8"><path d="M6 4l4 4-4 4" fill="none" stroke="#e0e0e0" stroke-width="2" stroke-linecap="round" stroke-linejoin="round"/></svg>
<div class="a t" style="left:1054.7px;top:362.1px;height:16px;line-height:16px;font-size:10px;color:#e0e0e0;font-weight:bold;">Physics Interpolation</div>
<svg class="ic" style="left:1045.5px;top:381.6px" width="7.5" height="7.5" viewBox="0 0 16 16" opacity="0.8"><path d="M6 4l4 4-4 4" fill="none" stroke="#e0e0e0" stroke-width="2" stroke-linecap="round" stroke-linejoin="round"/></svg>
<div class="a t" style="left:1054.7px;top:378.3px;height:16px;line-height:16px;font-size:10px;color:#e0e0e0;font-weight:bold;">Auto Translate</div>
<svg class="ic" style="left:1045.5px;top:397.4px" width="7.5" height="7.5" viewBox="0 0 16 16" opacity="0.8"><path d="M6 4l4 4-4 4" fill="none" stroke="#e0e0e0" stroke-width="2" stroke-linecap="round" stroke-linejoin="round"/></svg>
<div class="a t" style="left:1054.7px;top:394.2px;height:16px;line-height:16px;font-size:10px;color:#e0e0e0;font-weight:bold;">Editor Description</div>
<div class="a t" style="left:1048.9px;top:412.4px;height:16px;line-height:16px;font-size:10px;color:#a9acb1;">Script</div>
<div class="a" style="left:1157.0px;top:411.0px;width:93.0px;height:17.5px;background:#282e37;border-radius:2px;"></div>
<div class="a" style="left:1251.4px;top:411.0px;width:17.8px;height:17.5px;background:#282e37;border-radius:2px;"></div>
<div class="a t" style="left:1157px;top:412.7px;height:16px;line-height:16px;font-size:10px;color:#cdcfd2;width:93px;text-align:center;">&lt;empty&gt;</div>
<div class="a" style="left:1107.0px;top:433.3px;width:99.0px;height:19.0px;background:#2f353f;border-radius:2px;"></div>
<div class="a t" style="left:1124px;top:435.7px;height:16px;line-height:16px;font-size:10px;color:#cdcfd2;">Lägg till metadata</div>
<div class="a" style="left:1054.0px;top:0.0px;width:4.0px;height:1.0px;background:#c8cbd0;opacity:.55;"></div>
<div class="a" style="left:1079.0px;top:0.0px;width:1.5px;height:1.0px;background:#c8cbd0;opacity:.55;"></div>
<div class="a" style="left:1095.0px;top:0.0px;width:1.5px;height:1.0px;background:#c8cbd0;opacity:.55;"></div>
<div class="a" style="left:1117.0px;top:0.0px;width:8.0px;height:1.0px;background:#c8cbd0;opacity:.55;"></div>
<div class="a" style="left:1142.0px;top:0.0px;width:1.5px;height:1.0px;background:#c8cbd0;opacity:.55;"></div>
<div class="a" style="left:1158.0px;top:0.0px;width:5.0px;height:1.0px;background:#c8cbd0;opacity:.55;"></div>
<div class="a" style="left:1178.0px;top:0.0px;width:5.0px;height:1.0px;background:#c8cbd0;opacity:.55;"></div>
<div class="a" style="left:1219.0px;top:0.0px;width:1.5px;height:1.0px;background:#c8cbd0;opacity:.55;"></div>
<div class="a" style="left:1239.0px;top:0.0px;width:1.5px;height:1.0px;background:#c8cbd0;opacity:.55;"></div>
<div class="a" style="left:1257.0px;top:0.0px;width:13.0px;height:1.0px;background:#c8cbd0;opacity:.55;"></div>
<svg class="ic" style="left:520.6px;top:4.0px" width="10.7" height="10.7" viewBox="0 0 16 16"><path d="M4 14V5h6" fill="none" stroke="#70bafa" stroke-width="2"/><path d="M4 1.500L1 5.500h6zM14.500 5l-4-3v6z" fill="#70bafa"/><circle cx="4" cy="14" r="1.500" fill="#70bafa"/></svg>
<svg class="ic" style="left:558.1px;top:4.2px" width="10.7" height="10.7" viewBox="0 0 16 16"><path d="M5 1.500h8.500a1.500 1.500 0 0 1 1.500 1.500v1h-3v8.500a2.500 2.500 0 0 1-2.500 2.500H3.500a2.500 2.500 0 0 1-2.500-2.500V11h3V3.500a2 2 0 0 1 1-2z" fill="#e0e0e0"/></svg>
<svg class="ic" style="left:613.6px;top:4.0px" width="10.7" height="10.7" viewBox="0 0 16 16"><path d="M7 1h2v6h3L8 11.500 4 7h3zM1.500 10h2v3h9v-3h2v5h-13z" fill="#e0e0e0"/></svg>
<svg class="ic" style="left:682.6px;top:4.2px" width="10.7" height="10.7" viewBox="0 0 16 16"><path d="M1.500 5h9v8h-9z" fill="none" stroke="#e58e26" stroke-width="1.800"/><path d="M1.500 2h2v2.500h-2zM5 2h2v2.500H5zM8.500 2h2v2.500h-2z" fill="#e58e26"/><path d="M7 8h7.500v6.500H7z" fill="#4a8fd8"/><path d="M3 7.500h4v3H3z" fill="#e58e26"/></svg>
<svg class="ic" style="left:1047.2px;top:4.2px" width="10.7" height="10.7" viewBox="0 0 16 16"><path d="M3.500 1.500v13L14 8z" fill="#e0e0e0"/></svg>
<svg class="ic" style="left:1068.6px;top:4.2px" width="10.7" height="10.7" viewBox="0 0 16 16" opacity="0.45"><path d="M3 2h3.500v12H3zM9.500 2H13v12H9.500z" fill="#e0e0e0"/></svg>
<svg class="ic" style="left:1090.0px;top:4.2px" width="10.7" height="10.7" viewBox="0 0 16 16" opacity="0.45"><rect x="2.500" y="2.500" width="11" height="11" rx="1" fill="#e0e0e0"/></svg>
<svg class="ic" style="left:1111.4px;top:4.2px" width="10.7" height="10.7" viewBox="0 0 16 16" opacity="0.45"><path d="M1.500 2h13v8.500h-13zM5 12.500h6V14H5z" fill="#e0e0e0"/><path d="M6.500 4v4.500L10.500 6.200z" fill="#252b34"/></svg>
<svg class="ic" style="left:1132.8px;top:4.2px" width="10.7" height="10.7" viewBox="0 0 16 16"><path d="M1 6h14v8.500H1zM1 1.500l2 0 1.500 3H2.500zM5 1.500h2l1.500 3h-2zM9 1.500h2l1.500 3h-2zM13 1.500h2v3h-.5z" fill="#e0e0e0"/><path d="M6 7.500v5.500l5-2.750z" fill="#252b34"/></svg>
<svg class="ic" style="left:1154.2px;top:4.2px" width="10.7" height="10.7" viewBox="0 0 16 16"><path d="M1 6h14v8.500H1zM1 1.500l2 0 1.500 3H2.500zM5 1.500h2l1.500 3h-2zM9 1.500h2l1.500 3h-2zM13 1.500h2v3h-.5z" fill="#e0e0e0"/><path d="M4.500 8h3l.8 1h3.200v4h-7z" fill="#252b34"/></svg>
<svg class="ic" style="left:1175.6px;top:4.2px" width="10.7" height="10.7" viewBox="0 0 16 16"><circle cx="7" cy="7" r="5.500" fill="#e0e0e0"/><g fill="#252b34"><circle cx="7" cy="4" r="1.300"/><circle cx="7" cy="10" r="1.300"/><circle cx="4" cy="7" r="1.300"/><circle cx="10" cy="7" r="1.300"/></g><path d="M10.500 10.500l4 4" stroke="#e0e0e0" stroke-width="2.200" stroke-linecap="round"/></svg>
<svg class="ic" style="left:1264.2px;top:5.5px" width="8" height="8" viewBox="0 0 16 16"><path d="M4 6l4 4 4-4" fill="none" stroke="#5d9fd4" stroke-width="2" stroke-linecap="round" stroke-linejoin="round"/></svg>
<svg class="ic" style="left:11.7px;top:52.9px" width="10.7" height="10.7" viewBox="0 0 16 16"><path d="M7 1v6H1v2h6v6h2V9h6V7H9V1z" fill="#e0e0e0"/></svg>
<svg class="ic" style="left:33.0px;top:52.5px" width="11.5" height="11.5" viewBox="0 0 16 16"><g fill="none" stroke="#e0e0e0" stroke-width="2" stroke-linecap="round"><path d="M7 5.5l1.6-1.6a2.6 2.6 0 0 1 3.6 3.6L10.6 9"/><path d="M9 10.5l-1.6 1.6a2.6 2.6 0 0 1-3.6-3.6L5.4 7"/><path d="M6.3 9.7l3.4-3.4"/></g></svg>
<svg class="ic" style="left:182.8px;top:53.5px" width="9.5" height="9.5" viewBox="0 0 16 16"><path d="M6.5 1a5.5 5.5 0 1 0 3.1 10l3.7 3.7 1.4-1.4L11 9.6A5.5 5.5 0 0 0 6.5 1zm0 2a3.5 3.5 0 0 1 0 7 3.5 3.5 0 0 1 0-7z" fill="#e0e0e0"/></svg>
<svg class="ic" style="left:204.0px;top:52.9px" width="10.7" height="10.7" viewBox="0 0 16 16"><path d="M5 1.500h7.500a1.500 1.500 0 0 1 1.500 1.500v1h-3v4H8.500v3H6.500v4H3.500a2.500 2.500 0 0 1-2.500-2.500V11h3V3.500a2 2 0 0 1 1-2z" fill="#e0e0e0"/><path d="M11 9.500h2v2h2v2h-2v2h-2v-2H9v-2h2z" fill="#5fe07a"/></svg>
<svg class="ic" style="left:225.0px;top:52.9px" width="10.7" height="10.7" viewBox="0 0 16 16"><circle cx="8" cy="2.800" r="2.050" fill="#e0e0e0"/><circle cx="8" cy="8" r="2.050" fill="#e0e0e0"/><circle cx="8" cy="13.200" r="2.050" fill="#e0e0e0"/></svg>
<svg class="ic" style="left:231.7px;top:30.2px" width="10.7" height="10.7" viewBox="0 0 16 16" opacity="0.55"><circle cx="8" cy="2.800" r="2.050" fill="#e0e0e0"/><circle cx="8" cy="8" r="2.050" fill="#e0e0e0"/><circle cx="8" cy="13.200" r="2.050" fill="#e0e0e0"/></svg>
<svg class="ic" style="left:231.7px;top:351.2px" width="10.7" height="10.7" viewBox="0 0 16 16" opacity="0.55"><circle cx="8" cy="2.800" r="2.050" fill="#e0e0e0"/><circle cx="8" cy="8" r="2.050" fill="#e0e0e0"/><circle cx="8" cy="13.200" r="2.050" fill="#e0e0e0"/></svg>
<svg class="ic" style="left:1264.1px;top:30.2px" width="10.7" height="10.7" viewBox="0 0 16 16" opacity="0.55"><circle cx="8" cy="2.800" r="2.050" fill="#e0e0e0"/><circle cx="8" cy="8" r="2.050" fill="#e0e0e0"/><circle cx="8" cy="13.200" r="2.050" fill="#e0e0e0"/></svg>
<svg class="ic" style="left:8.9px;top:374.0px" width="11" height="11" viewBox="0 0 16 16"><path d="M10.500 1.500L5.500 8l5 6.500" fill="none" stroke="#e0e0e0" stroke-width="1.900" stroke-linecap="round" stroke-linejoin="round"/></svg>
<svg class="ic" style="left:22.2px;top:374.0px" width="11" height="11" viewBox="0 0 16 16" opacity="0.4"><path d="M5.500 1.500L10.500 8l-5 6.500" fill="none" stroke="#e0e0e0" stroke-width="1.900" stroke-linecap="round" stroke-linejoin="round"/></svg>
<svg class="ic" style="left:206.6px;top:396.6px" width="9.5" height="9.5" viewBox="0 0 16 16"><path d="M6.5 1a5.5 5.5 0 1 0 3.1 10l3.7 3.7 1.4-1.4L11 9.6A5.5 5.5 0 0 0 6.5 1zm0 2a3.5 3.5 0 0 1 0 7 3.5 3.5 0 0 1 0-7z" fill="#e0e0e0"/></svg>
<svg class="ic" style="left:224.8px;top:395.9px" width="10.7" height="10.7" viewBox="0 0 16 16"><path d="M4 1l3 4H5v6h2l-3 4-3-4h2V5H1z" fill="#e0e0e0"/><path d="M9 3h6v2H9zM9 7h4.500v2H9zM9 11h3v2H9z" fill="#e0e0e0"/></svg>
<svg class="ic" style="left:252.0px;top:29.9px" width="10.7" height="10.7" viewBox="0 0 16 16"><path d="M2 5h12v9H2z" fill="none" stroke="#e58e26" stroke-width="2"/><path d="M2 1.500h2.500v3H2zM6.500 1.500H9v3H6.500zM11 1.500h3v3h-3z" fill="#e58e26"/><path d="M3.500 8.500h6v4h-6z" fill="#4a8fd8"/><path d="M8 7h4.500v4H8z" fill="#e58e26" opacity=".85"/></svg>
<svg class="ic" style="left:328.2px;top:31.0px" width="8.5" height="8.5" viewBox="0 0 16 16"><path d="M3 3l10 10M13 3L3 13" stroke="#e0e0e0" stroke-width="2.600" stroke-linecap="round"/></svg>
<svg class="ic" style="left:352.4px;top:29.9px" width="10.7" height="10.7" viewBox="0 0 16 16"><path d="M8 1.500L14 4.500v7L8 14.500 2 11.500v-7z" fill="none" stroke="#e58e26" stroke-width="1.800" stroke-linejoin="round"/><path d="M2 4.500L8 7.500l6-3M8 7.500v7" fill="none" stroke="#4a8fd8" stroke-width="1.600"/></svg>
<svg class="ic" style="left:472.6px;top:29.9px" width="10.7" height="10.7" viewBox="0 0 16 16" opacity="0.5"><path d="M7.200 2v5.200H2v1.600h5.200V14h1.600V8.800H14V7.200H8.800V2z" fill="#e0e0e0"/></svg>
<svg class="ic" style="left:1020.6px;top:30.0px" width="10.7" height="10.7" viewBox="0 0 16 16"><path d="M1.500 1.500h5l-1.700 1.700 2 2-1.600 1.600-2-2L1.500 6.500zM14.500 1.500v5l-1.700-1.700-2 2-1.600-1.600 2-2L9.500 1.500zM1.500 14.500v-5l1.700 1.700 2-2 1.600 1.600-2 2 1.700 1.700zM14.500 14.500h-5l1.700-1.700-2-2 1.600-1.600 2 2 1.700-1.700z" fill="#e0e0e0"/></svg>
<svg class="ic" style="left:251.8px;top:52.1px" width="10.7" height="10.7" viewBox="0 0 16 16"><path d="M2 1.500l4.500 12.500 2-5 5-2z" fill="#70bafa"/><path d="M8.800 8.800l4.500 4.500" stroke="#70bafa" stroke-width="2.200" stroke-linecap="round"/></svg>
<svg class="ic" style="left:278.6px;top:52.1px" width="10.7" height="10.7" viewBox="0 0 16 16"><path d="M8 0L11 4.300H5zM8 16L5 11.700h6zM0 8L4.300 5v6zM16 8L11.700 5v6z" fill="#e0e0e0"/><circle cx="8" cy="8" r="2" fill="none" stroke="#e0e0e0" stroke-width="1.600"/></svg>
<svg class="ic" style="left:299.9px;top:52.1px" width="10.7" height="10.7" viewBox="0 0 16 16"><path d="M3.500 12.300A5.800 5.800 0 1 1 12.600 12.300" fill="none" stroke="#e0e0e0" stroke-width="2.700"/><path d="M0 9.500h6.400l-2.600 5.700z" fill="#e0e0e0"/><circle cx="8" cy="8.600" r="1.900" fill="#e0e0e0"/></svg>
<svg class="ic" style="left:321.2px;top:52.1px" width="10.7" height="10.7" viewBox="0 0 16 16"><path d="M15.500 .5H8.500L15.500 7.500zM.5 15.500h7L.5 8.500z" fill="#e0e0e0"/><path d="M5 11l6-6" stroke="#e0e0e0" stroke-width="2.800"/></svg>
<svg class="ic" style="left:347.6px;top:52.1px" width="10.7" height="10.7" viewBox="0 0 16 16"><path d="M1.500 1.500h10v2.200h-7.800v2.800h5.800v2.200H3.700v3.300h4v2.200H1.500z" fill="#e0e0e0"/><path d="M9 8.500l6 2.500-2.500 1 2 2.500-1 .8-2-2.500-1.500 2z" fill="#e0e0e0"/></svg>
<svg class="ic" style="left:369.1px;top:52.1px" width="10.7" height="10.7" viewBox="0 0 16 16"><path d="M7 1h2v3H7zM7 7h2v2H7zM1 7h3v2H1zM12 7h3v2h-3zM7 12h2v3H7z" fill="#e0e0e0"/><path d="M8.500 8.500l6.500 2.500-2.700 1.200 2 2.300-1.200 1-2-2.300-1.300 2.300z" fill="#e0e0e0"/></svg>
<svg class="ic" style="left:390.8px;top:52.1px" width="10.7" height="10.7" viewBox="0 0 16 16"><path d="M6 1.500a1 1 0 0 1 2 0V7h.5V2.500a1 1 0 0 1 2 0V7h.5V3.500a1 1 0 0 1 2 0V11a4.500 4.500 0 0 1-4.500 4.500H7.500A4 4 0 0 1 4 13L1.300 8.500a1 1 0 0 1 1.800-1L4 8.800V3a1 1 0 0 1 2 0z" fill="#e0e0e0"/></svg>
<svg class="ic" style="left:411.9px;top:52.1px" width="10.7" height="10.7" viewBox="0 0 16 16"><path d="M1.500 1.500L14.500 14.500H1.500zM4 8v4h4z" fill="#e0e0e0" fill-rule="evenodd"/></svg>
<svg class="ic" style="left:439.6px;top:52.1px" width="10.7" height="10.7" viewBox="0 0 16 16"><path d="M6 15.500V10a4.500 4.500 0 0 1 9 0v5.500h-2.800V10a1.700 1.700 0 0 0-3.400 0v5.500z" fill="#e0e0e0"/><circle cx="2.500" cy="4" r="1.500" fill="#e0e0e0"/><circle cx="2.500" cy="9.500" r="1.500" fill="#e0e0e0"/><circle cx="8" cy="2" r="1.500" fill="#e0e0e0"/></svg>
<svg class="ic" style="left:459.9px;top:52.1px" width="10.7" height="10.7" viewBox="0 0 16 16"><path d="M3 0h2v3h3V0h2v3h3v2h-3v3h-2V5H5v3h3v2H5v3H3v-3H0V8h3V5H0V3h3z" fill="#e0e0e0"/><path d="M7 16v-4a4 4 0 0 1 8 0v4h-2.500v-4a1.500 1.500 0 0 0-3 0v4z" fill="#e0e0e0"/></svg>
<svg class="ic" style="left:481.1px;top:52.1px" width="10.7" height="10.7" viewBox="0 0 16 16"><circle cx="8" cy="2.800" r="2.050" fill="#e0e0e0"/><circle cx="8" cy="8" r="2.050" fill="#e0e0e0"/><circle cx="8" cy="13.200" r="2.050" fill="#e0e0e0"/></svg>
<svg class="ic" style="left:506.9px;top:51.4px" width="12.3" height="12.3" viewBox="0 0 16 16"><path d="M8 1a4 4 0 0 0-4 4v2H3v7h10V7h-1V5a4 4 0 0 0-4-4zm0 2a2 2 0 0 1 2 2v2H6V5a2 2 0 0 1 2-2zM7 9h2v3H7z" fill="#e0e0e0" fill-rule="evenodd"/></svg>
<svg class="ic" style="left:529.2px;top:52.1px" width="10.7" height="10.7" viewBox="0 0 16 16"><path d="M1 1h3.500v3.500H1zM11.500 1H15v3.500h-3.500zM1 11.500h3.500V15H1zM11.500 11.500H15V15h-3.500z" fill="#e0e0e0"/><path d="M5.500 2h5M2.500 5.500v5M13.500 5.500v5M5.500 14h5" stroke="#e0e0e0" stroke-width="1.300" stroke-dasharray="1.500 1"/><path d="M6 6h4.500v2.500H12.500v4H8v-2.500H6z" fill="#e0e0e0" opacity=".7"/></svg>
<svg class="ic" style="left:554.9px;top:52.1px" width="10.7" height="10.7" viewBox="0 0 16 16"><path d="M10.500 1a2.500 2.500 0 0 0-2.200 3.600L4.600 8.300A2.500 2.500 0 1 0 3 12.900a2.500 2.500 0 1 0 4.700-1.500l3.700-3.700A2.500 2.500 0 1 0 13 3.100 2.500 2.500 0 0 0 10.500 1z" fill="#e0e0e0"/></svg>
<svg class="ic" style="left:581.9px;top:52.1px" width="10.7" height="10.7" viewBox="0 0 16 16" opacity="0.45"><path d="M6 2a3 3 0 0 0-1 5.800A3 3 0 0 0 2 11a3 3 0 0 0 6 .500l2 .500a3 3 0 1 0 2.500-4.800A3 3 0 0 0 9 3.500 3 3 0 0 0 6 2z" fill="#8da5f3"/></svg>
<div class="a" style="left:270.0px;top:49.0px;width:1.0px;height:17.0px;background:#2c323c;"></div>
<div class="a" style="left:338.9px;top:49.0px;width:1.0px;height:17.0px;background:#2c323c;"></div>
<div class="a" style="left:429.8px;top:49.0px;width:1.0px;height:17.0px;background:#2c323c;"></div>
<div class="a" style="left:498.5px;top:49.0px;width:1.0px;height:17.0px;background:#2c323c;"></div>
<div class="a" style="left:547.9px;top:49.0px;width:1.0px;height:17.0px;background:#2c323c;"></div>
<div class="a" style="left:573.2px;top:49.0px;width:1.0px;height:17.0px;background:#2c323c;"></div>
<div class="a" style="left:600.5px;top:49.0px;width:1.0px;height:17.0px;background:#2c323c;"></div>
<div class="a" style="left:634.8px;top:49.0px;width:1.0px;height:17.0px;background:#2c323c;"></div>
<svg class="ic" style="left:997.4px;top:447.6px" width="10.7" height="10.7" viewBox="0 0 16 16"><path d="M7 1h2v6h2.500l1 2.500h-9l1-2.500H7zM3 10.500h10l1 4.500H2z" fill="#e0e0e0"/></svg>
<svg class="ic" style="left:1018.9px;top:447.6px" width="10.7" height="10.7" viewBox="0 0 16 16"><path d="M1.500 1.500h9v2h-7v7h-2z" fill="#e0e0e0"/><path d="M5.500 5.500h9v9h-9z" fill="none" stroke="#e0e0e0" stroke-width="2"/></svg>
<svg class="ic" style="left:997.4px;top:472.6px" width="10.7" height="10.7" viewBox="0 0 16 16"><path d="M1 2h14v2H1zM7 7h8v2H7zM7 12h8v2H7z" fill="#e0e0e0"/><path d="M3.500 5.500L6 9H4.500v5h-2V9H1z" fill="#e0e0e0"/></svg>
<svg class="ic" style="left:1019.2px;top:473.0px" width="10" height="10" viewBox="0 0 16 16"><path d="M6.5 1a5.5 5.5 0 1 0 3.1 10l3.7 3.7 1.4-1.4L11 9.6A5.5 5.5 0 0 0 6.5 1zm0 2a3.5 3.5 0 0 1 0 7 3.5 3.5 0 0 1 0-7z" fill="#70bafa"/></svg>
<svg class="ic" style="left:997.4px;top:499.4px" width="10.7" height="10.7" viewBox="0 0 16 16"><rect x="1" y="1" width="14" height="14" rx="2" fill="#f0f0f0"/><path d="M7 3h2v6H7zM7 10.500h2v2H7z" fill="#252b34"/></svg>
<svg class="ic" style="left:997.4px;top:521.9px" width="10.7" height="10.7" viewBox="0 0 16 16"><circle cx="8" cy="8" r="7" fill="#ff7d7d"/><path d="M5 5l6 6M11 5l-6 6" stroke="#6a1818" stroke-width="2"/></svg>
<svg class="ic" style="left:997.4px;top:544.4px" width="10.7" height="10.7" viewBox="0 0 16 16"><circle cx="8" cy="8" r="7" fill="#ffe566"/><path d="M7 3.500h2v5.500H7zM7 10.500h2v2H7z" fill="#4a3d10"/></svg>
<svg class="ic" style="left:997.4px;top:566.8px" width="10.7" height="10.7" viewBox="0 0 16 16"><path d="M6.500 1.500h3v2.500h-3zM6 6h3.500v6.500a1.500 1.500 0 0 1-3 0V8H6z" fill="#e0e0e0"/></svg>
<svg class="ic" style="left:976.0px;top:626.0px" width="9.5" height="9.5" viewBox="0 0 16 16"><path d="M6.5 1a5.5 5.5 0 1 0 3.1 10l3.7 3.7 1.4-1.4L11 9.6A5.5 5.5 0 0 0 6.5 1zm0 2a3.5 3.5 0 0 1 0 7 3.5 3.5 0 0 1 0-7z" fill="#e0e0e0"/></svg>
<svg class="ic" style="left:941.0px;top:647.9px" width="10.7" height="10.7" viewBox="0 0 16 16" opacity="0.3"><path d="M2 6l1.500-3 2 .8L7 3h2l1.500.8 2-.8L14 6v5.500L11 14H5l-3-2.500z" fill="#e0e0e0"/></svg>
<svg class="ic" style="left:1018.4px;top:647.9px" width="10.7" height="10.7" viewBox="0 0 16 16"><path d="M1 1.500h14v2.200H1z" fill="#e0e0e0"/><path d="M4.500 5l3 4h-2v5.500h-2V9h-2zM11.500 5l3 4h-2v5.500h-2V9h-2z" fill="#e0e0e0"/></svg>
<svg class="ic" style="left:1045.6px;top:51.9px" width="10.7" height="10.7" viewBox="0 0 16 16"><path d="M2.500 1h6l4 4v4.500H10v2H8v3.500H2.500z" fill="#e0e0e0"/><path d="M8.500 1v4h4" fill="none" stroke="#252b34" stroke-width=".8"/><path d="M11 9.500h2v2h2v2h-2v2h-2v-2H9v-2h2z" fill="#5fe07a"/></svg>
<svg class="ic" style="left:1066.5px;top:51.9px" width="10.7" height="10.7" viewBox="0 0 16 16"><path d="M1.500 3h4.500l1.500 2h5.500v2H4.500L1.500 13z" fill="#e0e0e0"/><path d="M5 8h10.500l-3 6H2z" fill="#e0e0e0"/></svg>
<svg class="ic" style="left:1087.8px;top:51.9px" width="10.7" height="10.7" viewBox="0 0 16 16" opacity="0.4"><path d="M1.500 1.500h10.500l2.500 2.500v10.500h-13zM4 3v3.500h7V3zM8 9a2 2 0 1 0 0 4 2 2 0 0 0 0-4z" fill="#e0e0e0" fill-rule="evenodd"/></svg>
<svg class="ic" style="left:1109.2px;top:51.9px" width="10.7" height="10.7" viewBox="0 0 16 16"><circle cx="8" cy="2.800" r="2.050" fill="#e0e0e0"/><circle cx="8" cy="8" r="2.050" fill="#e0e0e0"/><circle cx="8" cy="13.200" r="2.050" fill="#e0e0e0"/></svg>
<svg class="ic" style="left:1222.7px;top:51.8px" width="11" height="11" viewBox="0 0 16 16" opacity="0.4"><path d="M10.500 1.500L5.500 8l5 6.500" fill="none" stroke="#e0e0e0" stroke-width="1.900" stroke-linecap="round" stroke-linejoin="round"/></svg>
<svg class="ic" style="left:1237.9px;top:51.8px" width="11" height="11" viewBox="0 0 16 16" opacity="0.4"><path d="M5.500 1.500L10.500 8l-5 6.500" fill="none" stroke="#e0e0e0" stroke-width="1.900" stroke-linecap="round" stroke-linejoin="round"/></svg>
<svg class="ic" style="left:1257.4px;top:51.9px" width="10.7" height="10.7" viewBox="0 0 16 16"><path d="M8 2a6 6 0 1 1-5.700 7.900" fill="none" stroke="#e0e0e0" stroke-width="2"/><path d="M.3 5.500h5.400L3 10z" fill="#e0e0e0"/><path d="M8 5v3.500l2.500 1.500" fill="none" stroke="#e0e0e0" stroke-width="1.600"/></svg>
<svg class="ic" style="left:1044.2px;top:73.2px" width="10.7" height="10.7" viewBox="0 0 16 16"><path d="M2 5h12v9H2z" fill="none" stroke="#e58e26" stroke-width="2"/><path d="M2 1.500h2.500v3H2zM6.500 1.500H9v3H6.500zM11 1.500h3v3h-3z" fill="#e58e26"/><path d="M3.500 8.500h6v4h-6z" fill="#4a8fd8"/><path d="M8 7h4.500v4H8z" fill="#e58e26" opacity=".85"/></svg>
<svg class="ic" style="left:1237.8px;top:73.8px" width="10" height="10" viewBox="0 0 16 16"><path d="M4 6l4 4 4-4" fill="none" stroke="#e0e0e0" stroke-width="2" stroke-linecap="round" stroke-linejoin="round"/></svg>
<svg class="ic" style="left:1257.2px;top:73.3px" width="11" height="11" viewBox="0 0 16 16"><circle cx="9.500" cy="4.300" r="2.900" fill="none" stroke="#e0e0e0" stroke-width="2.200"/><path d="M7.300 6.500L4 9.800" stroke="#e0e0e0" stroke-width="2.400" stroke-linecap="round"/><path d="M1 11.300h1.600a1.900 1.900 0 0 1 0 3.800H1zM8 11.300a1.900 1.900 0 1 0 .01 0zM15 11.900a1.900 1.900 0 1 0 0 2.600" fill="none" stroke="#e0e0e0" stroke-width="1.500"/></svg>
<svg class="ic" style="left:1236.2px;top:96.2px" width="9.5" height="9.5" viewBox="0 0 16 16"><path d="M6.5 1a5.5 5.5 0 1 0 3.1 10l3.7 3.7 1.4-1.4L11 9.6A5.5 5.5 0 0 0 6.5 1zm0 2a3.5 3.5 0 0 1 0 7 3.5 3.5 0 0 1 0-7z" fill="#e0e0e0"/></svg>
<svg class="ic" style="left:1257.4px;top:95.7px" width="10.7" height="10.7" viewBox="0 0 16 16"><path d="M3 1h2v7.200a2.800 2.800 0 1 1-2 0zM10 1v3.500a1.500 1.500 0 0 0 1 1.400V15h2V5.900a1.500 1.500 0 0 0 1-1.400V1h-1.200v3h-1.600V1z" fill="#e0e0e0"/></svg>
<svg class="ic" style="left:1141.0px;top:137.2px" width="9.5" height="9.5" viewBox="0 0 16 16"><path d="M13.500 8A5.500 5.500 0 1 1 8 2.500" fill="none" stroke="#e0e0e0" stroke-width="2" transform="rotate(-60 8 8) scale(-1 1) translate(-16 0)"/><path d="M1 3.500l5.500-.5-2 5z" fill="#e0e0e0"/></svg>
<svg class="ic" style="left:1257.0px;top:416.8px" width="6.5" height="6.5" viewBox="0 0 16 16"><path d="M4 6l4 4 4-4" fill="none" stroke="#e0e0e0" stroke-width="2" stroke-linecap="round" stroke-linejoin="round"/></svg>
<svg class="ic" style="left:1110.6px;top:437.4px" width="10.7" height="10.7" viewBox="0 0 16 16"><path d="M7.200 2v5.200H2v1.600h5.200V14h1.600V8.800H14V7.200H8.800V2z" fill="#e0e0e0"/></svg>
</body></html>
